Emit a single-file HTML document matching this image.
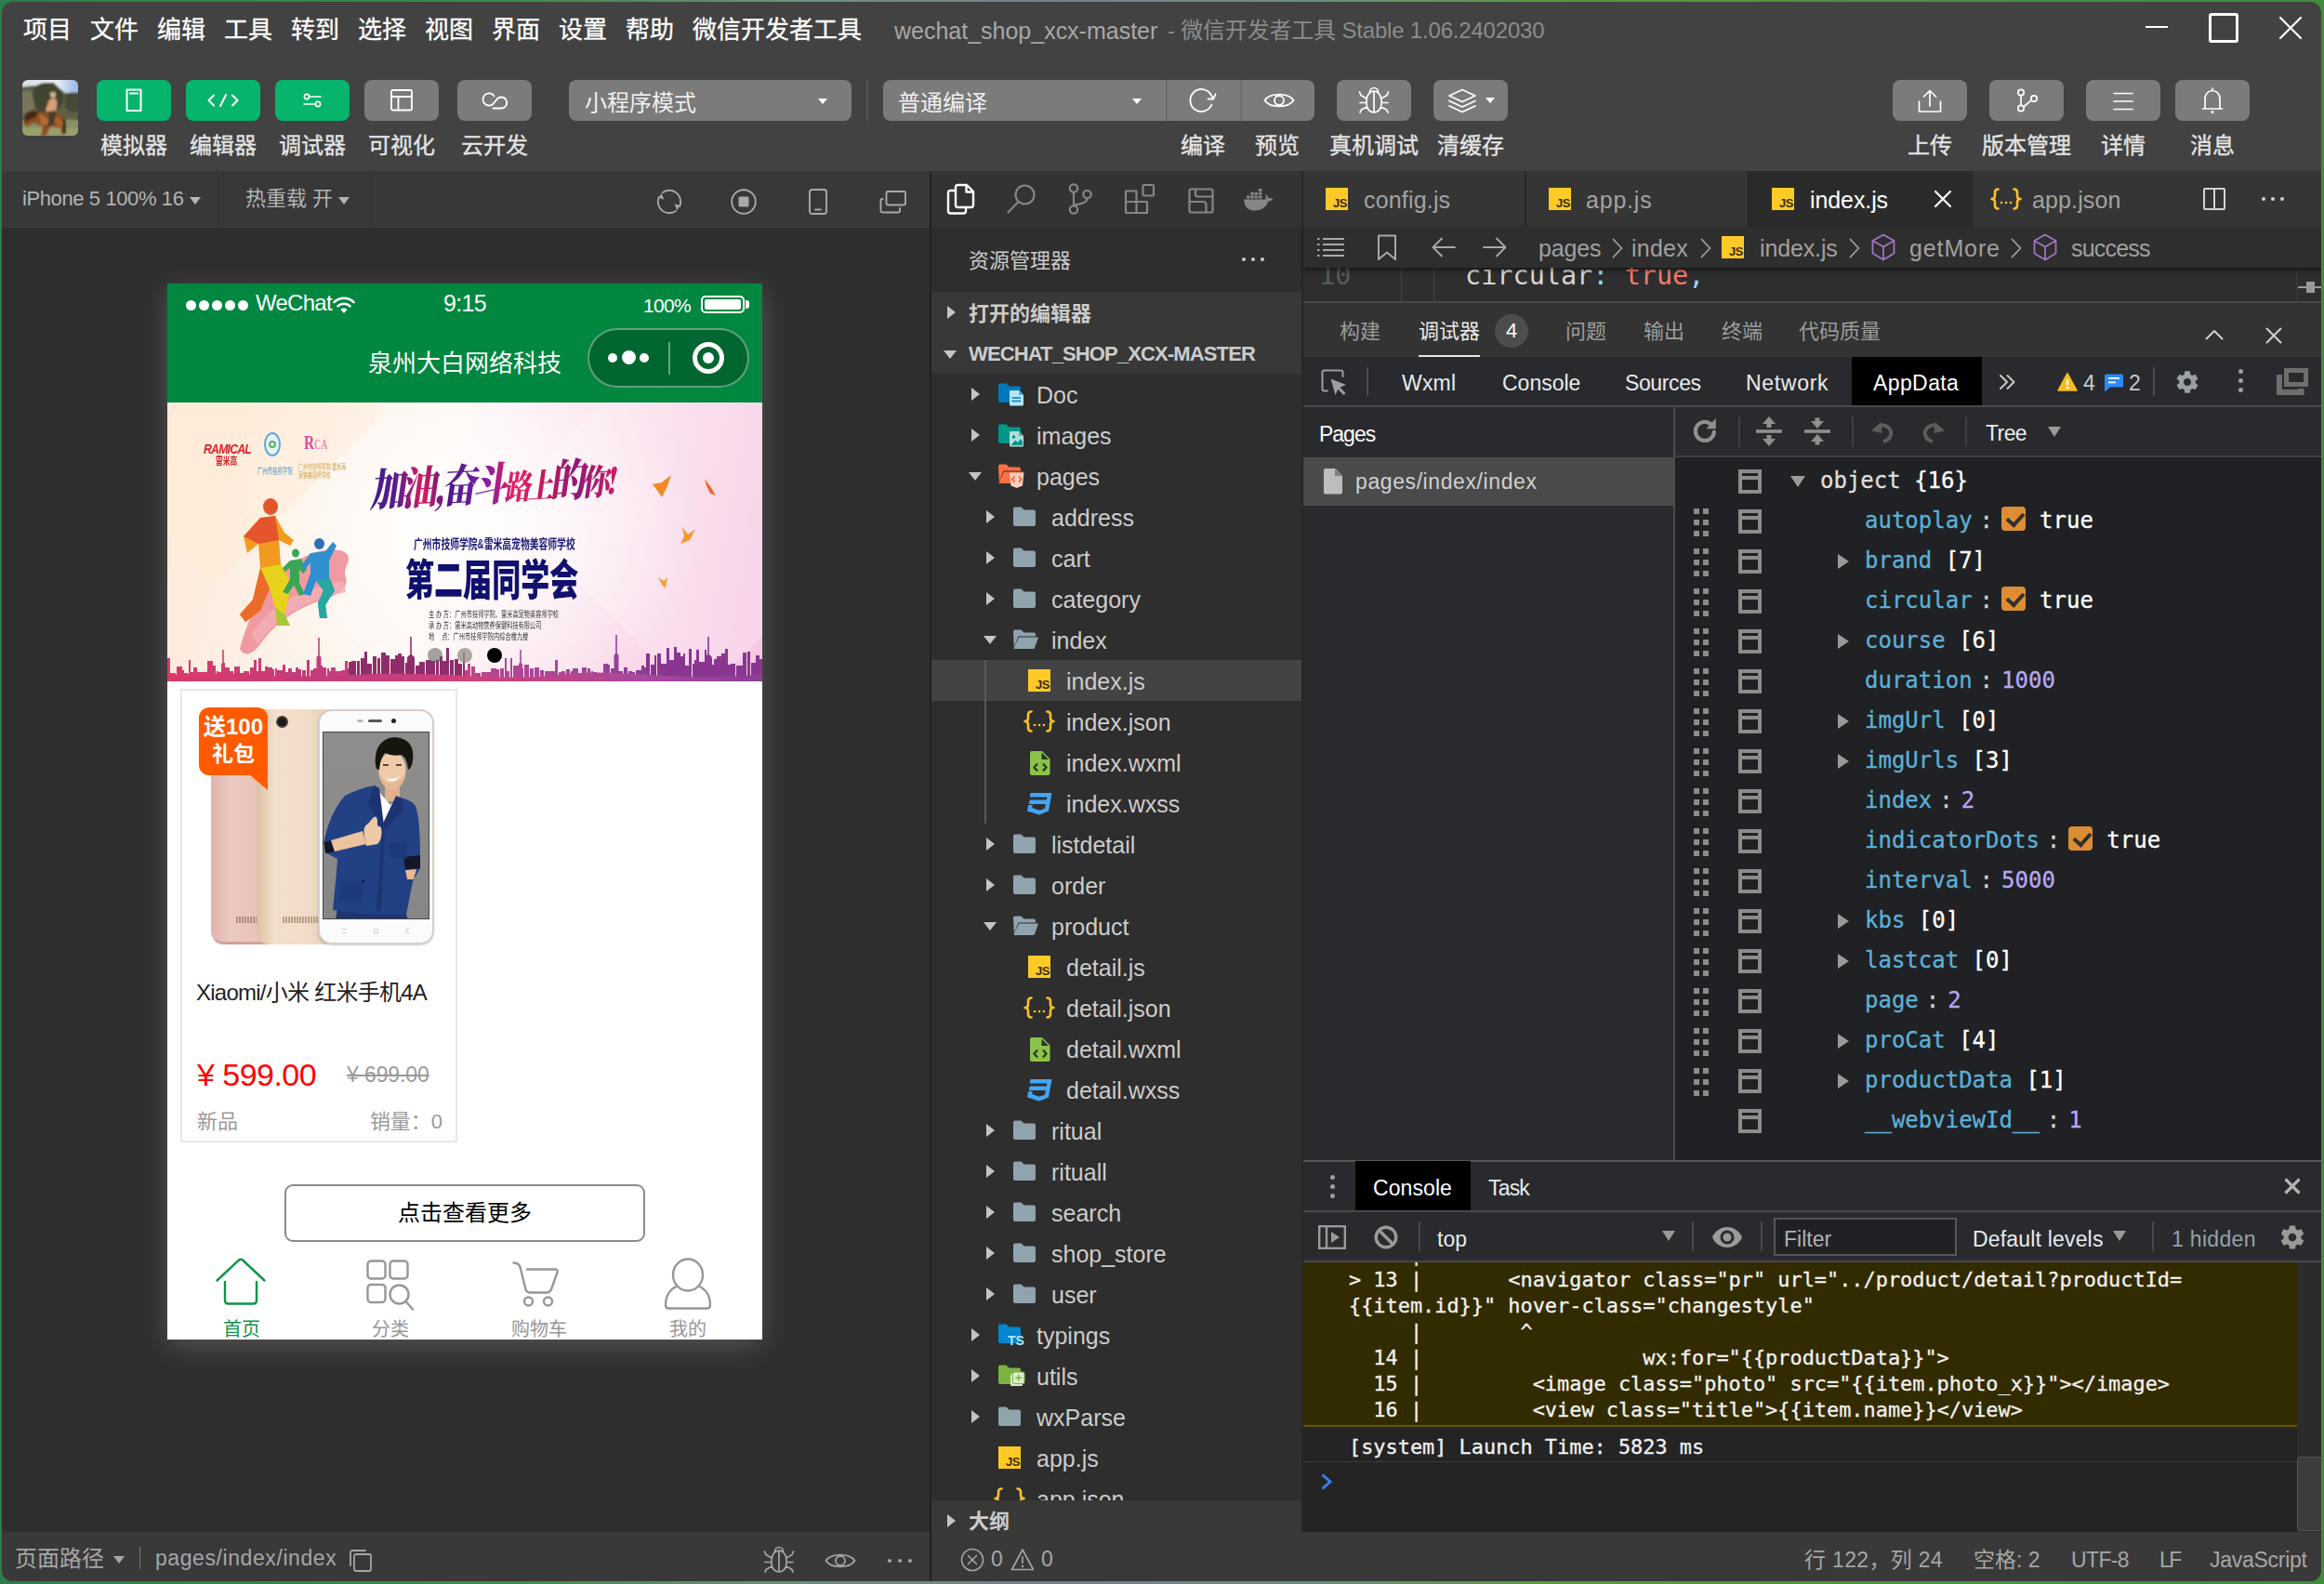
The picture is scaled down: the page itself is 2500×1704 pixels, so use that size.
<!DOCTYPE html>
<html lang="zh-CN">
<head>
<meta charset="utf-8">
<title>wechat_shop_xcx-master - 微信开发者工具 Stable 1.06.2402030</title>
<style>
html,body{margin:0;padding:0}
body{width:2500px;height:1704px;overflow:hidden;position:relative;
 background:linear-gradient(90deg,#2f7d4a 0%,#3f8a4c 22%,#6d8f7a 34%,#74808c 45%,#6f8a84 55%,#5a9a45 66%,#4c9440 80%,#3f8c3a 100%);
 font-family:"Liberation Sans","Noto Sans CJK SC",sans-serif;color:#ccc;-webkit-font-smoothing:antialiased}
*{box-sizing:border-box}
.a{position:absolute}
.win{position:absolute;left:0;top:0;width:2500px;height:1704px;clip-path:inset(2px 3px 3px 2px round 12px);background:#424242}
.t{position:absolute;white-space:nowrap;line-height:1}
.mono{font-family:"DejaVu Sans Mono","Liberation Mono",monospace}
svg{position:absolute;overflow:visible}
.st{fill:none;stroke-linecap:round;stroke-linejoin:round}
</style>
</head>
<body>
<div class="win">
<!-- ===== title bar ===== -->
<div id="menubar" style="position:absolute;left:0;top:0;width:2500px;height:62px;font-size:26px;color:#fff;-webkit-text-stroke:.3px">
<span class="t" style="left:25px;top:19px">项目</span>
<span class="t" style="left:97px;top:19px">文件</span>
<span class="t" style="left:169px;top:19px">编辑</span>
<span class="t" style="left:241px;top:19px">工具</span>
<span class="t" style="left:313px;top:19px">转到</span>
<span class="t" style="left:385px;top:19px">选择</span>
<span class="t" style="left:457px;top:19px">视图</span>
<span class="t" style="left:529px;top:19px">界面</span>
<span class="t" style="left:601px;top:19px">设置</span>
<span class="t" style="left:673px;top:19px">帮助</span>
<span class="t" style="left:745px;top:19px">微信开发者工具</span>
<span class="t" id="wt1" style="letter-spacing:-0.008px;left:962px;top:21px;color:#a8a8a8;font-size:25px;-webkit-text-stroke:0">wechat_shop_xcx-master</span>
<span class="t" id="wt2" style="letter-spacing:-0.188px;left:1256px;top:21px;color:#8c8c8c;font-size:24px;-webkit-text-stroke:0">- 微信开发者工具 Stable 1.06.2402030</span>
<!-- window controls -->
<div class="a" style="left:2308px;top:28px;width:24px;height:2px;background:#fff"></div>
<div class="a" style="left:2376px;top:14px;width:32px;height:32px;border:3px solid #fff;border-radius:3px"></div>
<svg style="left:2452px;top:18px" width="24" height="24" viewBox="0 0 24 24"><path class="st" d="M1 1 L23 23 M23 1 L1 23" stroke="#fff" stroke-width="2.2"/></svg>
</div>
<!-- ===== toolbar ===== -->
<style>
.tb{position:absolute;top:86px;height:44px;border-radius:8px;background:#7b7b7b}
.tb.g{background:#06b56b}
.tl{position:absolute;top:145px;font-size:24px;line-height:1;color:#e4e4e4;-webkit-text-stroke:.35px #e4e4e4;white-space:nowrap;transform:translateX(-50%)}
</style>
<div id="toolbar" style="position:absolute;left:0;top:62px;width:2500px;height:122px"></div>
<!-- avatar -->
<div class="a" style="left:24px;top:86px;width:60px;height:60px;border-radius:6px;overflow:hidden;background:#6b6d4a">
<svg style="left:0;top:0" width="60" height="60" viewBox="0 0 60 60">
<defs><filter id="avb" x="-20%" y="-20%" width="140%" height="140%"><feGaussianBlur stdDeviation="1.1"/></filter>
<linearGradient id="avsky" x1="0" x2="1" y1="0" y2="0"><stop offset="0" stop-color="#d9dde6"/><stop offset=".6" stop-color="#eef0f4"/><stop offset=".85" stop-color="#a9c4ea"/><stop offset="1" stop-color="#8db2e6"/></linearGradient></defs>
<g filter="url(#avb)">
<rect x="-4" y="-4" width="68" height="20" fill="url(#avsky)"/>
<path d="M-4 8 L12 6 L20 7 L24 3 L34 3 L40 9 L46 14 L64 13 V64 H-4 Z" fill="#5d6144"/>
<path d="M11 12 Q14 4 24 3 Q34 2 38 9 Q46 12 44 24 Q40 34 28 36 Q16 36 12 26 Z" fill="#3f4530"/>
<path d="M46 16 Q54 12 62 16 V34 Q52 36 46 30 Z" fill="#474a35"/>
<path d="M-4 12 L10 12 L14 30 L-4 40 Z" fill="#77745a"/>
<path d="M-4 44 Q14 40 30 46 Q46 40 64 44 V64 H-4 Z" fill="#8b9162"/>
<path d="M-4 52 H64 V64 H-4 Z" fill="#9aa06c"/>
<!-- horse -->
<path d="M3 37 Q8 32 18 34 Q28 36 36 36 Q44 36 46 42 L46 56 L43 60 L41 52 Q36 50 30 50 L26 60 L20 60 L22 50 Q16 48 12 46 L6 50 L1 48 L3 42 Z" fill="#8a4f22"/>
<path d="M18 36 Q24 38 30 44 Q26 50 20 48 Z" fill="#b06c2e"/>
<path d="M34 40 Q42 40 44 46 L42 52 Q36 48 34 44 Z" fill="#a8642a"/>
<path d="M3 37 Q8 32 18 34 L14 40 L6 44 L2 46 Z" fill="#4a2614"/>
<path d="M44 42 L47 44 L47 58 L44 58 Z" fill="#2c1a10"/>
<!-- rider -->
<path d="M28 24 Q30 19 35 20 Q38 22 37 28 L36 34 L28 35 L25 33 Z" fill="#d9a07a"/>
<circle cx="33" cy="16.500" r="2.800" fill="#d9b48e"/>
<path d="M29.500 15 H36.500 L35 13 H31 Z" fill="#cbb58c"/>
<path d="M28 34 L36 33 L35 44 L31 50 L28 50 Z" fill="#4b3a2a"/>
</g></svg>
</div>
<div class="tb g" style="left:104px;width:80px"><svg style="left:31px;top:9px" width="18" height="26" viewBox="0 0 18 26"><rect class="st" x="1.5" y="1.5" width="15" height="22.5" stroke="#fff" stroke-width="2"/><path class="st" d="M5 5.5H13" stroke="#fff" stroke-width="2" stroke-linecap="butt"/></svg></div>
<div class="tb g" style="left:200px;width:80px"><svg style="left:23px;top:15px" width="34" height="14" viewBox="0 0 34 14"><path class="st" d="M7 1.5 L1.5 7 L7 12.5 M27 1.5 L32.5 7 L27 12.5 M20 1 L14 13" stroke="#fff" stroke-width="2"/></svg></div>
<div class="tb g" style="left:296px;width:80px"><svg style="left:30px;top:14px" width="20" height="16" viewBox="0 0 20 16"><circle cx="4" cy="4" r="2.6" class="st" stroke="#fff" stroke-width="1.6"/><path class="st" d="M7 4H19 M1 12H13" stroke="#fff" stroke-width="1.6"/><circle cx="16" cy="12" r="2.6" class="st" stroke="#fff" stroke-width="1.6"/></svg></div>
<div class="tb" style="left:392px;width:80px"><svg style="left:28px;top:10px" width="24" height="24" viewBox="0 0 24 24"><rect class="st" x="1" y="1" width="22" height="21.5" rx="1.5" stroke="#fff" stroke-width="1.8"/><path class="st" d="M1 8H23 M8.5 8V22.5" stroke="#fff" stroke-width="1.8"/></svg></div>
<div class="tb" style="left:492px;width:80px"><svg style="left:25px;top:12px" width="30" height="20" viewBox="0 0 30 20"><path class="st" d="M13.5 18.5 H22.5 A6 6 0 1 0 17 9.5 L13.5 13.8 A6.6 6.6 0 1 1 14.5 5.2" stroke="#fff" stroke-width="1.8"/></svg></div>
<span class="tl" style="left:144px">模拟器</span>
<span class="tl" style="left:240px">编辑器</span>
<span class="tl" style="left:336px">调试器</span>
<span class="tl" style="left:432px">可视化</span>
<span class="tl" style="left:532px">云开发</span>
<!-- dropdowns -->
<div class="tb" style="left:612px;width:304px"><span class="t" style="left:17px;top:13px;font-size:24px;color:#f0f0f0">小程序模式</span><div class="a" style="left:268px;top:20px;border:5px solid transparent;border-top:6px solid #fff"></div></div>
<div class="a" style="left:932px;top:86px;width:2px;height:44px;background:#555"></div>
<div class="tb" style="left:950px;width:464px"><span class="t" style="left:16px;top:13px;font-size:24px;color:#f0f0f0">普通编译</span><div class="a" style="left:268px;top:20px;border:5px solid transparent;border-top:6px solid #fff"></div>
 <div class="a" style="left:304px;top:0;width:2px;height:44px;background:#6f6f6f"></div>
 <div class="a" style="left:384px;top:0;width:2px;height:44px;background:#6f6f6f"></div>
 <svg style="left:329px;top:7px" width="32" height="30" viewBox="0 0 32 30"><path class="st" d="M24.5 19.5 A12 12 0 1 1 23.5 8.5 L26 13" stroke="#fff" stroke-width="1.8"/><path class="st" d="M20.5 13.5 L26.2 13.6 L28.6 8.2" stroke="#fff" stroke-width="1.8"/></svg>
 <svg style="left:409px;top:11px" width="34" height="22" viewBox="0 0 34 22"><path class="st" d="M1.5 11 C7 2.5 27 2.5 32.5 11 C27 19.5 7 19.5 1.5 11 Z" stroke="#fff" stroke-width="1.8"/><circle cx="17" cy="11" r="5" class="st" stroke="#fff" stroke-width="1.8"/></svg>
</div>
<span class="tl" style="left:1294px">编译</span>
<span class="tl" style="left:1374px">预览</span>
<div class="tb" style="left:1438px;width:80px"><svg style="left:23px;top:7px" width="34" height="30" viewBox="0 0 34 30"><path class="st" d="M9 15 A8 10 0 0 1 25 15 V19 A8 9 0 0 1 9 19 Z M17 6 V28 M12.5 6 A4.5 4.5 0 0 1 21.500 6 M9 13 L3 9.500 L1.5 6 M25 13 L31 9.500 L32.500 6 M9 17.500 H2 M25 17.500 H32 M9.500 22 L3.500 25 L2 28 M24.500 22 L30.500 25 L32 28" stroke="#fff" stroke-width="1.7"/></svg></div>
<div class="tb" style="left:1542px;width:80px"><svg style="left:15px;top:9px" width="32" height="28" viewBox="0 0 32 28"><path class="st" d="M16 1.500 L30 8 L16 14.500 L2 8 Z M2 13.500 L16 20 L30 13.500 M2 19 L16 25.500 L30 19" stroke="#fff" stroke-width="1.7"/></svg><div class="a" style="left:56px;top:19px;border:5px solid transparent;border-top:6px solid #fff"></div></div>
<span class="tl" style="left:1478px">真机调试</span>
<span class="tl" style="left:1582px">清缓存</span>
<div class="tb" style="left:2036px;width:80px"><svg style="left:27px;top:10px" width="26" height="26" viewBox="0 0 26 26"><path class="st" d="M1.5 13 V24 H24.5 V13 M13 18 V2 M6.500 8 L13 1.500 L19.500 8" stroke="#fff" stroke-width="1.7"/></svg></div>
<div class="tb" style="left:2140px;width:80px"><svg style="left:29px;top:9px" width="24" height="26" viewBox="0 0 24 26"><circle cx="5" cy="4.500" r="3.200" class="st" stroke="#fff" stroke-width="1.7"/><circle cx="5" cy="21.500" r="3.200" class="st" stroke="#fff" stroke-width="1.7"/><circle cx="19" cy="11" r="3.200" class="st" stroke="#fff" stroke-width="1.7"/><path class="st" d="M5 8 V18 M7.800 20 L16.200 12.800" stroke="#fff" stroke-width="1.700"/></svg></div>
<div class="tb" style="left:2244px;width:80px"><svg style="left:29px;top:13px" width="22" height="20" viewBox="0 0 22 20"><path class="st" d="M1 1.500 H21 M1 10 H21 M1 18.500 H21" stroke="#fff" stroke-width="1.700" stroke-linecap="butt"/></svg></div>
<div class="tb" style="left:2340px;width:80px"><svg style="left:28px;top:7px" width="24" height="30" viewBox="0 0 24 30"><path class="st" d="M1.500 24 H22.500 M4 24 V13 A8 8.500 0 0 1 20 13 V24 M12 2 V4" stroke="#fff" stroke-width="1.700"/><circle cx="12" cy="27.500" r="1.500" fill="#fff"/></svg></div>
<span class="tl" style="left:2076px">上传</span>
<span class="tl" style="left:2180px">版本管理</span>
<span class="tl" style="left:2284px">详情</span>
<span class="tl" style="left:2380px">消息</span>
<!-- ===== simulator ===== -->
<div class="a" style="left:0;top:184px;width:1000px;height:61px;background:#383838"></div>
<div class="a" style="left:0;top:245px;width:1000px;height:1403px;background:#2e2e2e"></div>
<div class="a" style="left:0;top:1648px;width:1000px;height:56px;background:#393939"></div>
<div class="a" style="left:1000px;top:184px;width:2px;height:1520px;background:#212121"></div>
<div class="a" style="left:240px;top:184px;width:1px;height:60px;background:#333"></div>
<div class="a" style="left:398px;top:184px;width:1px;height:60px;background:#333"></div>
<span class="t" id="simdev" style="letter-spacing:-0.396px;left:24px;top:203px;font-size:22px;color:#b4b4b4">iPhone 5 100% 16</span>
<div class="a" style="left:204px;top:212px;border:6px solid transparent;border-top:8px solid #b4b4b4"></div>
<span class="t" id="simhot" style="letter-spacing:-0.025px;left:264px;top:203px;font-size:22px;color:#b4b4b4">热重载 开</span>
<div class="a" style="left:364px;top:212px;border:6px solid transparent;border-top:8px solid #b4b4b4"></div>
<!-- sim toolbar icons -->
<svg style="left:706px;top:203px" width="28" height="28" viewBox="0 0 28 28"><path class="st" d="M7 4 A12.200 12.200 0 0 1 25.060 19.160 M21 24 A12.200 12.200 0 0 1 2.940 8.840" stroke="#a8a8a8" stroke-width="1.900" stroke-linecap="butt"/><path d="M5.500 4.200 L3.200 10 L8.300 11.800 Z M22.500 23.800 L24.800 18 L19.700 16.200 Z" fill="#a8a8a8"/></svg>
<svg style="left:786px;top:203px" width="28" height="28" viewBox="0 0 28 28"><circle cx="14" cy="14" r="12.800" class="st" stroke="#a8a8a8" stroke-width="1.900"/><rect x="8.500" y="8.500" width="11" height="11" rx="1.500" fill="#a8a8a8"/></svg>
<svg style="left:870px;top:203px" width="20" height="28" viewBox="0 0 20 28"><rect x="1" y="1" width="18" height="26" rx="2.500" class="st" stroke="#a8a8a8" stroke-width="1.900"/><path class="st" d="M7 22.500 H13" stroke="#a8a8a8" stroke-width="1.900" stroke-linecap="butt"/></svg>
<svg style="left:946px;top:205px" width="30" height="26" viewBox="0 0 30 26"><rect x="7.500" y="1" width="20.500" height="14.500" rx="1.500" class="st" stroke="#a8a8a8" stroke-width="1.900"/><path class="st" d="M3.500 9 H3 A1.500 1.500 0 0 0 1.500 10.500 V22 A1.500 1.500 0 0 0 3 23.500 H20.500 A1.500 1.500 0 0 0 22 22 V19" stroke="#a8a8a8" stroke-width="1.900"/></svg>
<!-- phone -->
<div id="phone" class="a" style="left:180px;top:305px;width:640px;height:1136px;background:#fff;box-shadow:0 7px 28px rgba(255,255,255,.19);overflow:hidden">
 <div class="a" style="left:0;top:0;width:640px;height:128px;background:#028741"></div>
 <!-- status bar -->
 <div class="a" style="left:20px;top:18px;width:11px;height:11px;border-radius:50%;background:#fff;box-shadow:14px 0 0 #fff,28px 0 0 #fff,42px 0 0 #fff,56px 0 0 #fff"></div>
 <span class="t" id="wechat" style="letter-spacing:-0.728px;left:95px;top:9px;font-size:24px;color:#fff">WeChat</span>
 <svg style="left:178px;top:13px" width="24" height="20" viewBox="0 0 24 20"><path class="st" d="M1.500 7 A15 15 0 0 1 22.500 7" stroke="#fff" stroke-width="2.600"/><path class="st" d="M5.500 11.300 A9.500 9.500 0 0 1 18.500 11.300" stroke="#fff" stroke-width="2.600"/><path d="M8.500 15 A5 5 0 0 1 15.500 15 L12 19 Z" fill="#fff"/></svg>
 <span class="t" id="clock" style="letter-spacing:-0.693px;left:320px;top:9px;font-size:25px;color:#fff;transform:translateX(-50%)">9:15</span>
 <span class="t" id="batt" style="letter-spacing:-0.68px;left:512px;top:13px;font-size:21px;color:#fff">100%</span>
 <div class="a" style="left:574px;top:13px;width:47px;height:19px;border:2px solid #fff;border-radius:5px"><div class="a" style="left:2px;top:2px;width:39px;height:11px;background:#fff;border-radius:2px"></div></div>
 <div class="a" style="left:622px;top:18px;width:4px;height:9px;background:#fff;border-radius:0 3px 3px 0"></div>
 <!-- nav -->
 <span class="t" style="left:320px;top:73px;font-size:26px;color:#fff;transform:translateX(-50%)">泉州大白网络科技</span>
 <div class="a" style="left:452px;top:48px;width:174px;height:64px;border-radius:32px;background:#01662f;border:2px solid rgba(255,255,255,.38)">
  <div class="a" style="left:20px;top:25px;width:10px;height:10px;border-radius:50%;background:#fff"></div>
  <div class="a" style="left:35px;top:22px;width:15px;height:15px;border-radius:50%;background:#fff"></div>
  <div class="a" style="left:54px;top:25px;width:10px;height:10px;border-radius:50%;background:#fff"></div>
  <div class="a" style="left:85px;top:13px;width:2px;height:35px;background:rgba(255,255,255,.4)"></div>
  <div class="a" style="left:111px;top:13px;width:34px;height:34px;border-radius:50%;border:5px solid #fff"><div class="a" style="left:6px;top:6px;width:12px;height:12px;border-radius:50%;background:#fff"></div></div>
 </div>
 <!-- banner -->
 <div id="banner" class="a" style="left:0;top:128px;width:640px;height:300px;overflow:hidden;background:
   radial-gradient(ellipse 260px 200px at 50% 45%,rgba(255,255,255,.95),rgba(255,255,255,0) 100%),
   linear-gradient(100deg,#fde9d9 0%,#fdf1e6 22%,#fff7f3 45%,#fbe3ee 68%,#f6c6e3 100%)">
  <div class="a" style="left:420px;top:-40px;width:300px;height:300px;transform:rotate(45deg);background:rgba(255,255,255,.22)"></div>
  <div class="a" style="left:-80px;top:-120px;width:260px;height:260px;transform:rotate(45deg);background:rgba(255,236,214,.5)"></div>
  <!-- logos -->
  <span class="t" style="left:39px;top:42px;font-size:15px;font-weight:bold;font-style:italic;color:#d8232a;letter-spacing:-1px;transform:scaleX(.82);transform-origin:0 0">RAMICAL</span>
  <span class="t" style="left:52px;top:58px;font-size:11px;font-weight:bold;color:#d8232a;transform:scaleX(.7);transform-origin:0 0">雷米高</span>
  <div class="a" style="left:104px;top:32px;width:18px;height:26px;border-radius:50%;border:2px solid #5aa7d6;background:#e8f4fb"><div class="a" style="left:3px;top:7px;width:8px;height:8px;border-radius:50%;border:2px solid #58b25a"></div></div>
  <span class="t" style="left:97px;top:70px;font-size:9px;color:#4a90c4;transform:scaleX(.6);transform-origin:0 0">广州市技师学院</span>
  <span class="t" style="left:147px;top:32px;font-size:22px;font-weight:bold;font-family:'Liberation Serif',serif;color:#e2459a;transform:scaleX(.7);transform-origin:0 0">R<span style="font-size:14px;color:#ef86bd">CA</span></span>
  <span class="t" style="left:141px;top:66px;font-size:8px;color:#c9a04a;transform:scaleX(.62);transform-origin:0 0;line-height:1.1">广州市技师学院·雷米高<br>宠物美容师学校</span>
  <!-- runners -->
  <svg style="left:70px;top:100px" width="140" height="180" viewBox="0 0 140 180">
   <path d="M8 165 C20 120 40 90 70 70 C95 55 118 56 124 64 C128 72 118 78 122 88 C126 100 112 108 98 112 C74 120 50 132 30 160 C24 168 14 176 8 165 Z" fill="#ee8a94" opacity=".85"/>
   <path d="M20 150 C40 120 70 100 120 92 L122 104 C80 112 48 130 28 160 Z" fill="#f3b0b6" opacity=".8"/>
   <!-- main runner -->
   <path d="M33 12 a8 9 0 1 0 16 0 a8 9 0 1 0 -16 0 Z" fill="#e4552b"/>
   <path d="M30 24 L46 22 L56 40 L66 48 L62 54 L50 48 L52 74 L64 96 L56 128 L62 140 L48 140 L46 120 L40 100 L30 124 L14 136 L8 128 L22 112 L30 78 L28 52 L16 62 L12 44 Z" fill="#f29a1f"/>
   <path d="M30 24 L46 22 L50 48 L28 52 L12 44 Z" fill="#e4552b"/>
   <path d="M30 78 L52 74 L64 96 L56 128 L46 120 L40 100 Z" fill="#e8d31c"/>
   <path d="M40 100 L30 124 L14 136 L8 128 L22 112 L30 78 Z" fill="#ea6a2a"/>
   <path d="M56 128 L62 140 L48 140 L46 120 Z" fill="#a6c937"/>
   <!-- green small runner -->
   <path d="M64 62 a4 4.500 0 1 0 8 0 a4 4.500 0 1 0 -8 0 Z M62 70 L74 68 L80 80 L76 84 L72 80 L72 94 L78 106 L72 108 L66 96 L60 106 L54 104 L62 90 L62 78 L56 82 L54 78 Z" fill="#3aa655"/>
   <!-- blue runner -->
   <path d="M88 52 a5.500 6 0 1 0 11 0 a5.500 6 0 1 0 -11 0 Z" fill="#2c6fb5"/>
   <path d="M84 62 L100 60 L108 50 L112 54 L104 70 L104 88 L110 102 L100 118 L102 132 L94 132 L92 116 L98 102 L90 92 L84 108 L76 106 L84 84 L84 72 L78 80 L74 76 Z" fill="#2f8fcf"/>
   <path d="M98 102 L90 92 L104 88 L110 102 L100 118 L102 132 L94 132 L92 116 Z" fill="#27a7a0"/>
  </svg>
  <!-- headline -->
  <span class="t" id="bhead" style="left:214px;top:62px;padding:6px 14px 10px 4px;font-size:48px;font-weight:900;font-style:italic;font-family:'Noto Serif CJK SC','Noto Sans CJK SC',serif;letter-spacing:-5px;transform:rotate(-3deg) scaleX(.79);transform-origin:0 50%;background:linear-gradient(90deg,#3b1a86 0%,#5a1d8e 12%,#d81b60 22%,#4a1a8a 32%,#7b1fa2 46%,#e91e63 58%,#c2185b 70%,#8e1a7a 82%,#d81b60 100%);-webkit-background-clip:text;background-clip:text;color:transparent;-webkit-text-fill-color:transparent">加油,奋斗<span style="font-size:36px">路上</span>的<span style="font-size:38px">你!</span></span>
  <span class="t" style="left:265px;top:145px;font-size:14px;font-weight:bold;color:#1b1b7a;transform:scaleX(.7);transform-origin:0 0">广州市技师学院&amp;雷米高宠物美容师学校</span>
  <span class="t" id="bmain" style="left:256px;top:168px;font-size:46px;font-weight:900;color:#10106e;transform:scaleX(.675);transform-origin:0 0">第二届同学会</span>
  <span class="t" style="left:281px;top:222px;font-size:9px;color:#333;line-height:12px;transform:scaleX(.69);transform-origin:0 0">主 办 方：广州市技师学院、雷米高宠物美容师学校<br>承 办 方：雷米高动物营养保健科技有限公司<br>地　  点：广州市技师学院内综合楼九楼</span>
  <!-- birds -->
  <svg style="left:520px;top:76px" width="80" height="130" viewBox="0 0 80 130">
   <path d="M2 12 L12 10 L22 2 L18 14 L12 26 L8 20 Z" fill="#f08a24"/>
   <path d="M58 6 L64 14 L70 24 L64 22 L60 14 Z" fill="#ef6c2a"/>
   <path d="M34 58 L40 66 L48 60 L42 72 L32 76 L36 68 Z" fill="#f29a2e"/>
   <path d="M8 112 L14 116 L18 112 L16 124 L12 120 Z" fill="#f0a33a"/>
  </svg>
  <!-- skyline -->
  <svg style="left:0;top:236px" width="640" height="64" viewBox="0 0 640 64" preserveAspectRatio="none">
   <defs><linearGradient id="sky" x1="0" x2="1" y1="0" y2="0"><stop offset="0" stop-color="#da3a6a"/><stop offset=".3" stop-color="#c23c7c"/><stop offset=".5" stop-color="#d0407a"/><stop offset=".8" stop-color="#a8489a"/><stop offset="1" stop-color="#8a3f96"/></linearGradient></defs>
   <path fill="url(#sky)" d="M0 64 V39 H3 V64 Z M3 64 V55 H9 V64 Z M10 64 V48 H16 V64 Z M16 64 V52 H18 V64 Z M18 64 V55 H22 V64 Z M23 64 V41 H25 V64 Z M25 64 V54 H28 V64 Z M28 64 V49 H32 V64 Z M32 64 V54 H35 V64 Z M35 64 V54 H38 V64 Z M38 64 V54 H43 V64 Z M43 64 V42 H46 V64 Z M46 64 V42 H49 V64 Z M49 64 V47 H52 V64 Z M53 64 V53 H55 V64 Z M55 64 V54 H59 V64 Z M59 64 V44 H62 V64 Z M62 64 V49 H67 V64 Z M67 64 V53 H71 V64 Z M72 64 V48 H78 V64 Z M78 64 V55 H82 V64 Z M82 64 V53 H88 V64 Z M89 64 V49 H93 V64 Z M93 64 V41 H96 V64 Z M96 64 V53 H98 V64 Z M98 64 V39 H101 V64 Z M101 64 V53 H105 V64 Z M105 64 V48 H108 V64 Z M108 64 V49 H113 V64 Z M113 64 V51 H115 V64 Z M116 64 V50 H118 V64 Z M118 64 V52 H124 V64 Z M124 64 V46 H127 V64 Z M127 64 V54 H130 V64 Z M130 64 V50 H134 V64 Z M134 64 V54 H138 V64 Z M138 64 V49 H141 V64 Z M141 64 V51 H144 V64 Z M145 64 V52 H149 V64 Z M150 64 V41 H153 V64 Z M154 64 V52 H157 V64 Z M157 64 V50 H161 V64 Z M161 64 V47 H167 V64 Z M167 64 V49 H171 V64 Z M172 64 V50 H174 V64 Z M174 64 V53 H176 V64 Z M176 64 V49 H181 V64 Z M181 64 V53 H187 V64 Z M187 64 V52 H191 V64 Z M191 64 V42 H194 V64 Z M194 64 V50 H195 V64 Z M58 64 V45 L59.2 44 V30 H60.8 V44 L62 45 V64 Z M160.5 64 V38 L162.2 36 V17 H163.8 V36 L165.5 38 V64 Z M320 64 V52 H323 V64 Z M323 64 V45 H326 V64 Z M327 64 V48 H331 V64 Z M331 64 V55 H337 V64 Z M338 64 V54 H342 V64 Z M342 64 V54 H348 V64 Z M348 64 V50 H354 V64 Z M354 64 V51 H357 V64 Z M358 64 V50 H362 V64 Z M363 64 V39 H365 V64 Z M365 64 V53 H368 V64 Z M369 64 V39 H371 V64 Z M372 64 V47 H378 V64 Z M379 64 V50 H383 V64 Z M384 64 V46 H389 V64 Z M390 64 V50 H394 V64 Z M395 64 V49 H400 V64 Z M401 64 V52 H405 V64 Z M406 64 V53 H411 V64 Z M411 64 V53 H417 V64 Z M417 64 V41 H420 V64 Z M421 64 V54 H424 V64 Z M424 64 V53 H428 V64 Z M429 64 V51 H433 V64 Z M434 64 V53 H436 V64 Z M436 64 V50 H442 V64 Z M442 64 V55 H445 V64 Z M446 64 V49 H451 V64 Z M452 64 V50 H455 V64 Z M456 64 V53 H458 V64 Z M458 64 V54 H462 V64 Z M462 64 V55 H466 V64 Z M466 64 V55 H468 V64 Z M469 64 V45 H474 V64 Z M474 64 V46 H476 V64 Z M477 64 V50 H479 V64 Z M479 64 V50 H483 V64 Z M483 64 V40 H485 V64 Z M485 64 V53 H490 V64 Z M491 64 V49 H495 V64 Z M496 64 V53 H500 V64 Z M500 64 V54 H503 V64 Z M504 64 V52 H510 V64 Z M510 64 V47 H513 V64 Z M513 64 V49 H515 V64 Z M378 64 V45 L379.2 44 V30 H380.8 V44 L382 45 V64 Z M480.5 64 V36 L482.2 34 V14 H483.8 V34 L485.5 36 V64 Z"/>
   <path fill="#8f2d6c" d="M195 64 V43 H198 V64 Z M198 64 V42 H203 V64 Z M204 64 V42 H207 V64 Z M208 64 V39 H212 V64 Z M212 64 V32 H215 V64 Z M215 64 V45 H220 V64 Z M221 64 V37 H225 V64 Z M226 64 V39 H229 V64 Z M230 64 V33 H235 V64 Z M235 64 V36 H239 V64 Z M240 64 V40 H245 V64 Z M245 64 V36 H248 V64 Z M248 64 V34 H252 V64 Z M252 64 V37 H255 V64 Z M256 64 V44 H260 V64 Z M260 64 V42 H263 V64 Z M263 64 V46 H266 V64 Z M267 64 V47 H271 V64 Z M271 64 V43 H274 V64 Z M274 64 V43 H277 V64 Z M278 64 V41 H284 V64 Z M284 64 V42 H288 V64 Z M289 64 V41 H292 V64 Z M293 64 V37 H296 V64 Z M296 64 V42 H300 V64 Z M300 64 V28 H303 V64 Z M304 64 V41 H308 V64 Z M309 64 V40 H313 V64 Z M313 64 V45 H317 V64 Z M318 64 V32 H320 V64 Z M258 64 V38 L261.2 35 V16 H262.8 V35 L266 38 V64 Z"/>
   <path fill="#8a3690" d="M515 64 V34 H519 V64 Z M520 64 V46 H524 V64 Z M524 64 V36 H526 V64 Z M527 64 V34 H531 V64 Z M531 64 V45 H537 V64 Z M537 64 V28 H540 V64 Z M540 64 V41 H545 V64 Z M545 64 V27 H548 V64 Z M548 64 V33 H552 V64 Z M552 64 V37 H555 V64 Z M555 64 V34 H557 V64 Z M557 64 V47 H561 V64 Z M561 64 V29 H564 V64 Z M565 64 V45 H567 V64 Z M567 64 V41 H569 V64 Z M569 64 V30 H572 V64 Z M572 64 V43 H578 V64 Z M578 64 V30 H580 V64 Z M581 64 V47 H584 V64 Z M584 64 V46 H588 V64 Z M588 64 V40 H591 V64 Z M591 64 V37 H596 V64 Z M596 64 V34 H600 V64 Z M600 64 V29 H603 V64 Z M603 64 V46 H606 V64 Z M606 64 V45 H611 V64 Z M612 64 V47 H615 V64 Z M615 64 V47 H619 V64 Z M619 64 V33 H623 V64 Z M624 64 V32 H627 V64 Z M628 64 V44 H633 V64 Z M633 64 V36 H637 V64 Z M637 64 V40 H640 V64 Z M578 64 V38 L581.2 35 V16 H582.8 V35 L586 38 V64 Z"/>
   <path fill="url(#sky)" d="M0 64 V57 Q50 54 100 57 T200 57 T320 58 T420 57 T520 57 T640 56 V64 Z"/>
  </svg>
  <!-- indicator dots -->
  <div class="a" style="left:280px;top:264px;width:16px;height:16px;border-radius:50%;background:rgba(90,90,90,.55)"></div>
  <div class="a" style="left:312px;top:264px;width:16px;height:16px;border-radius:50%;background:rgba(150,150,140,.8)"></div>
  <div class="a" style="left:344px;top:264px;width:16px;height:16px;border-radius:50%;background:#000"></div>
 </div>
 <!-- product card (phone coords: page - (180,305)) -->
 <div id="card" class="a" style="left:14px;top:436px;width:298px;height:488px;border:2px solid #e7e7e7;background:#fff">
  <!-- product image: card-inner coords = page - (196,743) -->
  <!-- pink phone -->
  <div class="a" style="left:31px;top:20px;width:70px;height:253px;border-radius:12px 6px 6px 14px;background:linear-gradient(90deg,#e0b3ad 0%,#ecc9c2 30%,#e6beb7 100%);box-shadow:inset 0 -12px 0 -9px #d2a29c"></div>
  <div class="a" style="left:58px;top:243px;width:24px;height:7px;background:repeating-linear-gradient(90deg,#b98e88 0 2px,transparent 2px 3px)"></div>
  <!-- gold phone -->
  <div class="a" style="left:80px;top:20px;width:80px;height:253px;border-radius:12px 6px 6px 14px;background:linear-gradient(90deg,#dcc0a4 0%,#f3e0cc 25%,#f1dcc7 70%,#e5cbb2 100%)"></div>
  <div class="a" style="left:101px;top:27px;width:13px;height:13px;border-radius:50%;background:#1a1a1a;border:2px solid #4a4030"></div>
  <div class="a" style="left:90px;top:31px;width:5px;height:5px;border-radius:50%;background:#f6edd8;border:1px solid #cdb898"></div>
  <div class="a" style="left:108px;top:243px;width:40px;height:7px;background:repeating-linear-gradient(90deg,#b99f84 0 2px,transparent 2px 3px)"></div>
  <!-- white phone -->
  <div class="a" style="left:146px;top:20px;width:125px;height:253px;border-radius:15px;background:#fbfbfb;border:2px solid #d9cfc8;box-shadow:0 1px 2px rgba(0,0,0,.2)">
   <div class="a" style="left:3px;top:22px;width:115px;height:202px;background:#8b8b8b;border:1px solid #444;overflow:hidden">
    <!-- person -->
    <svg style="left:0;top:0" width="115" height="202" viewBox="0 0 115 202">
     <defs><linearGradient id="pbg" x1="0" x2="0" y1="0" y2="1"><stop offset="0" stop-color="#8f8e8d"/><stop offset="1" stop-color="#868686"/></linearGradient>
     <filter id="pblur" x="-5%" y="-5%" width="110%" height="110%"><feGaussianBlur stdDeviation=".5"/></filter></defs>
     <rect width="115" height="202" fill="url(#pbg)"/>
     <g filter="url(#pblur)">
     <path d="M13 202 L15 188 L50 192 L88 192 L91 202 Z" fill="#1b3470"/>
     <path d="M66 58 H82 V74 H66 Z" fill="#e2b08c"/>
     <path d="M23 68 Q38 60 55 57 L63 99 L83 70 Q95 73 99 79 Q104 92 104 136 L104 146 L96 160 L89 196 Q50 198 10 191 L14 150 L15 136 L2 129 L0.500 118 Q6 88 23 68 Z" fill="#213f84"/>
     <path d="M58 62 L72 78 L82 70 L63.500 98 Z" fill="#ffffff"/>
     <path d="M55 57 L60 60 L65 100 L62 104 L48 76 Z" fill="#1a3572"/>
     <path d="M83 70 L78 68 L63 100 L66 104 L86 84 Z" fill="#1a3572"/>
     <path d="M63 100 L60 150 L56 192 L62 192 L66 104 Z" fill="#1a3572"/>
     <path d="M0.500 118 L8 116 L12 128 L2 130 Z" fill="#17162c"/>
     <path d="M8 116 L42 106 L46 120 L12 128 Z" fill="#ecc29f"/>
     <path d="M44 112 Q42 100 48 98 L53 92 Q57 88 58 94 L58 100 L62 102 Q64 114 58 120 L46 122 Z" fill="#efc8a6"/>
     <path d="M86 134 L104 132 L104 146 L88 148 Z" fill="#17162c"/>
     <path d="M88 148 L100 147 L97 158 L90 158 Z" fill="#e6ba96"/>
     <path d="M70 118 L90 118 L89 136 L71 134 Z" fill="#1d3a7a"/>
     <path d="M18 160 L42 162 L40 184 L17 180 Z" fill="#1d3a7a"/>
     <ellipse cx="74" cy="41" rx="14.500" ry="20" fill="#f0caa9"/>
     <path d="M61 44 Q60 56 70 60 Q76 62 82 58 Q88 52 88 44 Q80 56 70 54 Q64 52 61 44 Z" fill="#e6b893"/>
     <path d="M56 34 Q54 16 66 8 Q76 2 88 8 Q98 14 96 30 Q95 38 91 40 Q90 28 84 24 Q74 26 66 22 Q61 28 60 40 Q56 40 56 34 Z" fill="#191411"/>
     <path d="M66 48 Q74 53 82 47 Q75 57 66 48 Z" fill="#fff"/>
     <path d="M64 35 h6 M78 35 h6" stroke="#2a1c14" stroke-width="1.400"/>
     <circle cx="42.500" cy="160" r="1.300" fill="#0f1838"/>
     </g>
    </svg>
   </div>
   <div class="a" style="left:52px;top:9px;width:15px;height:3px;border-radius:2px;background:#555"></div>
   <div class="a" style="left:40px;top:9px;width:7px;height:3px;border-radius:2px;background:#bbb"></div>
   <div class="a" style="left:77px;top:8px;width:5px;height:5px;border-radius:50%;background:#222"></div>
   <div class="a" style="left:24px;top:234px;width:5px;height:5px;border-top:1px solid #d0d0d0;border-bottom:1px solid #d0d0d0"></div>
   <div class="a" style="left:58px;top:234px;width:5px;height:5px;border:1px solid #d0d0d0"></div>
   <div class="a" style="left:93px;top:234px;width:5px;height:5px;border-left:1px solid #d0d0d0;border-bottom:1px solid #d0d0d0;transform:rotate(45deg)"></div>
  </div>
  <!-- badge -->
  <div class="a" style="left:18px;top:18px;width:74px;height:73px;border-radius:11px 11px 0 11px;background:#ff5a00"></div>
  <div class="a" style="left:72px;top:90px;width:20px;height:17px;background:#ff5a00;clip-path:polygon(0 0,100% 0,100% 100%)"></div>
  <span class="t" style="left:55px;top:27px;font-size:24px;font-weight:bold;color:#fff;transform:translateX(-50%)">送100</span>
  <span class="t" style="left:55px;top:57px;font-size:23px;font-weight:bold;color:#fff;transform:translateX(-50%)">礼包</span>
  <!-- texts -->
  <span class="t" id="ptitle" style="letter-spacing:-0.748px;left:15px;top:313px;font-size:24px;color:#222">Xiaomi/小米 红米手机4A</span>
  <span class="t" id="pprice" style="letter-spacing:-0.532px;left:16px;top:396px;font-size:34px;color:#ff0000">¥ 599.00</span>
  <span class="t" id="pold" style="letter-spacing:-0.104px;left:177px;top:402px;font-size:23px;color:#9a9a9a;text-decoration:line-through">¥ 699.00</span>
  <span class="t" style="left:16px;top:453px;font-size:22px;color:#9a9a9a">新品</span>
  <span class="t" id="psale" style="letter-spacing:-0.037px;right:14px;top:453px;font-size:22px;color:#9a9a9a">销量：0</span>
 </div>
 <!-- more button -->
 <div class="a" style="left:126px;top:969px;width:388px;height:62px;border:2px solid #8a8a8a;border-radius:9px;background:#fff"><span class="t" style="left:50%;top:17px;font-size:24px;color:#000;transform:translateX(-50%)">点击查看更多</span></div>
 <!-- tabbar -->
 <svg style="left:52px;top:1048px" width="54" height="52" viewBox="0 0 54 52"><path class="st" d="M1.500 24.500 L25 2.500 Q27 1 29 2.500 L52.500 24.500" stroke="#0f9448" stroke-width="2.400"/><path class="st" d="M10 26 V46 Q10 49.500 13.500 49.500 H40.500 Q44 49.500 44 46 V26" stroke="#0f9448" stroke-width="2.400"/></svg>
 <span class="t" style="left:80px;top:1115px;font-size:20px;color:#0f9448;transform:translateX(-50%)">首页</span>
 <svg style="left:214px;top:1050px" width="52" height="56" viewBox="0 0 52 56"><rect x="1.500" y="1.500" width="19" height="19" rx="3.500" class="st" stroke="#979797" stroke-width="2.400"/><rect x="25.500" y="1.500" width="19" height="19" rx="3.500" class="st" stroke="#979797" stroke-width="2.400"/><rect x="1.500" y="27" width="19" height="19" rx="3.500" class="st" stroke="#979797" stroke-width="2.400"/><circle cx="35.500" cy="37.500" r="10" class="st" stroke="#979797" stroke-width="2.400"/><path class="st" d="M43 45.500 L50 53.500" stroke="#979797" stroke-width="2.400"/></svg>
 <span class="t" style="left:240px;top:1115px;font-size:20px;color:#979797;transform:translateX(-50%)">分类</span>
 <svg style="left:371px;top:1052px" width="52" height="50" viewBox="0 0 52 50"><path class="st" d="M1.500 1.500 Q7 1.500 8.500 6 L14.500 30 Q15.500 33.500 19 33.500 H37 Q40.500 33.500 42 30 L48.500 12 Q49.500 8.500 46 8.500 H16" stroke="#979797" stroke-width="2.400"/><circle cx="17.500" cy="43" r="4.500" class="st" stroke="#979797" stroke-width="2.400"/><circle cx="38.500" cy="43" r="4.500" class="st" stroke="#979797" stroke-width="2.400"/></svg>
 <span class="t" style="left:400px;top:1115px;font-size:20px;color:#979797;transform:translateX(-50%)">购物车</span>
 <svg style="left:534px;top:1048px" width="52" height="56" viewBox="0 0 52 56"><ellipse cx="26" cy="18.500" rx="16" ry="17" class="st" stroke="#979797" stroke-width="2.400"/><path class="st" d="M14.500 30.500 Q2 36 2 51 Q2 54.500 5.500 54.500 H46.500 Q50 54.500 50 51 Q50 36 37.500 30.500" stroke="#979797" stroke-width="2.400"/></svg>
 <span class="t" style="left:560px;top:1115px;font-size:20px;color:#979797;transform:translateX(-50%)">我的</span>
</div>
<!-- sim status bar -->
<span class="t" style="left:16px;top:1665px;font-size:24px;color:#a6a6a6">页面路径</span>
<div class="a" style="left:122px;top:1674px;border:6px solid transparent;border-top:8px solid #a6a6a6"></div>
<div class="a" style="left:150px;top:1664px;width:1px;height:24px;background:#777"></div>
<span class="t" id="simpath" style="letter-spacing:0.581px;left:167px;top:1665px;font-size:23px;color:#a6a6a6">pages/index/index</span>
<svg style="left:376px;top:1667px" width="24" height="24" viewBox="0 0 24 24"><rect x="5" y="5" width="18" height="18" rx="2" class="st" stroke="#a6a6a6" stroke-width="1.800"/><path class="st" d="M1 17 V3 A2 2 0 0 1 3 1 H17" stroke="#a6a6a6" stroke-width="1.800"/></svg>
<svg style="left:821px;top:1663px" width="34" height="30" viewBox="0 0 34 30"><path class="st" d="M9 15 A8 10 0 0 1 25 15 V19 A8 9 0 0 1 9 19 Z M17 6 V28 M12.500 6 A4.500 4.500 0 0 1 21.500 6 M9 13 L3 9.500 L1.500 6 M25 13 L31 9.500 L32.500 6 M9 17.500 H2 M25 17.500 H32 M9.500 22 L3.500 25 L2 28 M24.500 22 L30.500 25 L32 28" stroke="#a6a6a6" stroke-width="1.700"/></svg>
<svg style="left:887px;top:1668px" width="34" height="22" viewBox="0 0 34 22"><path class="st" d="M1.500 11 C7 2.500 27 2.500 32.500 11 C27 19.500 7 19.500 1.500 11 Z" stroke="#a6a6a6" stroke-width="1.800"/><circle cx="17" cy="11" r="5" class="st" stroke="#a6a6a6" stroke-width="1.800"/></svg>
<div class="a" style="left:955px;top:1677px;width:4px;height:4px;border-radius:50%;background:#a6a6a6;box-shadow:11px 0 0 #a6a6a6,22px 0 0 #a6a6a6"></div>
<!-- ===== explorer ===== -->
<style>
.ex{position:absolute;left:1002px;width:398px}
.row{position:absolute;left:0;width:398px;height:44px}
.row .lb{position:absolute;top:11px;font-size:25px;line-height:1;color:#cccccc;white-space:nowrap}
.ar{position:absolute;width:0;height:0}
.ar.r{border:7px solid transparent;border-left:9px solid #c4c4c4;border-right:0}
.ar.d{border:7px solid transparent;border-top:9px solid #c4c4c4;border-bottom:0}
.ic{position:absolute}
</style>
<div class="ex" style="top:184px;height:60px;background:#333333"></div>
<div class="ex" style="top:244px;height:1404px;background:#2e2e2e"></div>

<svg style="left:1018px;top:197px" width="32" height="34" viewBox="0 0 32 34"><path class="st" d="M10 8 H4.500 Q2 8 2 10.500 V30 Q2 32.500 4.500 32.500 H18.500 Q21 32.500 21 30 V26" stroke="#fff" stroke-width="2.400"/><path class="st" d="M12.500 2 H22 L29 9 V23.500 Q29 26 26.500 26 H12.500 Q10 26 10 23.500 V4.500 Q10 2 12.500 2 Z M21.500 2.500 V9.500 H28.500" stroke="#fff" stroke-width="2.400"/></svg>
<svg style="left:1083px;top:198px" width="32" height="32" viewBox="0 0 32 32"><circle cx="19.500" cy="11.500" r="10" class="st" stroke="#868686" stroke-width="2.200"/><path class="st" d="M12.500 19 L1.500 30.500" stroke="#868686" stroke-width="2.200"/></svg>
<svg style="left:1148px;top:197px" width="28" height="34" viewBox="0 0 28 34"><circle cx="7" cy="5.500" r="4.200" class="st" stroke="#868686" stroke-width="2.200"/><circle cx="7" cy="28.500" r="4.200" class="st" stroke="#868686" stroke-width="2.200"/><circle cx="21.500" cy="12" r="4.200" class="st" stroke="#868686" stroke-width="2.200"/><path class="st" d="M7 10 V24 M21.500 16.500 Q21.500 22 7 23.500" stroke="#868686" stroke-width="2.200"/></svg>
<svg style="left:1209px;top:197px" width="34" height="34" viewBox="0 0 34 34"><path class="st" d="M2 8.500 H13.500 V20 H25 V32 H3.500 Q2 32 2 30.500 Z M2 20 H13.500 V32" stroke="#868686" stroke-width="2.200"/><rect x="20.500" y="2" width="11.500" height="11.500" rx="1" class="st" stroke="#868686" stroke-width="2.200"/></svg>
<svg style="left:1278px;top:202px" width="28" height="28" viewBox="0 0 28 28"><rect x="1.500" y="1.500" width="25" height="25" rx="2" class="st" stroke="#868686" stroke-width="2.200"/><path class="st" d="M8 1.500 V7 Q8 9.500 10.500 9.500 H26.500 M1.500 15 H16 Q19.500 15 19.500 18.500 V26.500" stroke="#868686" stroke-width="2.200"/></svg>
<svg style="left:1337px;top:202px" width="34" height="26" viewBox="0 0 34 26"><path d="M1 12.500 H24.500 Q25.500 9 24 6.500 Q26.500 7.500 27.500 11 Q30.500 10.500 32.500 12 Q31 14.500 27.500 14.500 Q24 24.500 12.500 24.500 Q2 24.500 1 12.500 Z" fill="#868686"/><path d="M4 8.500 h3.500 v3 h-3.500z M8.300 8.500 h3.500 v3 h-3.500z M12.600 8.500 h3.500 v3 h-3.500z M16.900 8.500 h3.500 v3 h-3.500z M8.300 4.700 h3.500 v3 h-3.500z M12.600 4.700 h3.500 v3 h-3.500z M16.900 4.700 h3.500 v3 h-3.500z M16.900 .9 h3.500 v3 h-3.500z" fill="#868686"/></svg>

<span class="t" style="left:1042px;top:270px;font-size:22px;color:#cccccc">资源管理器</span>
<div class="a" style="left:1336px;top:277px;width:4px;height:4px;border-radius:50%;background:#ccc;box-shadow:10px 0 0 #ccc,20px 0 0 #ccc"></div>
<div class="ex" style="top:314px;height:88px;background:#383838"></div>
<div class="ar r" style="left:1019px;top:329px"></div>
<span class="t" style="left:1042px;top:327px;font-size:22px;font-weight:bold;color:#cccccc">打开的编辑器</span>
<div class="ar d" style="left:1015px;top:377px"></div>
<span class="t" id="projname" style="letter-spacing:-0.872px;left:1042px;top:370px;font-size:22px;font-weight:bold;color:#cccccc">WECHAT_SHOP_XCX-MASTER</span>
<div class="ex" id="tree" style="top:402px;height:1212px;overflow:hidden">

<div class="row" style="top:0px"><div class="ar r" style="left:43px;top:15px"></div><svg class="ic" style="left:70px;top:9px" width="30" height="26" viewBox="0 0 30 26"><path d="M2 3.500 Q2 1.500 4 1.500 H10.500 L13.500 4.500 H24 Q26 4.500 26 6.500 V20 Q26 22 24 22 H4 Q2 22 2 20 Z" fill="#0277bd"/><path d="M15 9 H24 L29 14 V24 Q29 25.500 27.500 25.500 H15 Q14 25.500 14 24 V10 Q14 9 15 9 Z" fill="#b3e5fc"/><path d="M16.500 17 H26 M16.500 20.500 H26" stroke="#0277bd" stroke-width="1.600"/><path d="M24 9 V14 H29 Z" fill="#4fb3e8"/></svg><span class="lb" style="left:113px">Doc</span></div>
<div class="row" style="top:44px"><div class="ar r" style="left:43px;top:15px"></div><svg class="ic" style="left:70px;top:9px" width="30" height="26" viewBox="0 0 30 26"><path d="M2 3.500 Q2 1.500 4 1.500 H10.500 L13.500 4.500 H24 Q26 4.500 26 6.500 V20 Q26 22 24 22 H4 Q2 22 2 20 Z" fill="#009688"/><path d="M15 9 H24 L29 14 V24 Q29 25.500 27.500 25.500 H15 Q14 25.500 14 24 V10 Q14 9 15 9 Z" fill="#b2dfdb"/><path d="M15.500 24 L20.500 18.500 L23 21 L26 17 L28 20 V24 Z" fill="#009688"/><circle cx="18.500" cy="15" r="1.800" fill="#009688"/><path d="M24 9 V14 H29 Z" fill="#4db6ac"/></svg><span class="lb" style="left:113px">images</span></div>
<div class="row" style="top:88px"><div class="ar d" style="left:40px;top:18px"></div><svg class="ic" style="left:70px;top:8px" width="32" height="28" viewBox="0 0 32 28"><path d="M2 3.500 Q2 1.500 4 1.500 H10.500 L13.500 4.500 H24 Q26 4.500 26 6.500 V8.500 H7.500 L2.800 20 Z" fill="#ff7043"/><path d="M8 9.500 H29 L25.200 20.500 Q24.700 22 23 22 H3.500 Q2.300 22 2.800 20.500 Z" fill="#ff7043"/><path d="M14 10.500 H29.500 L28 24.500 L21.700 27 L15.500 24.500 Z" fill="#ffccbc"/><path d="M19.500 14.500 L16.800 17.500 L19.500 20.500 M24 14.500 L26.700 17.500 L24 20.500" stroke="#ff5722" stroke-width="1.600" fill="none"/></svg><span class="lb" style="left:113px">pages</span></div>
<div class="row" style="top:132px"><div class="ar r" style="left:59px;top:15px"></div><svg class="ic" style="left:86px;top:10px" width="28" height="24" viewBox="0 0 28 24"><path d="M2 3.500 Q2 1.500 4 1.500 H10.500 L13.500 4.500 H24 Q26 4.500 26 6.500 V20 Q26 22 24 22 H4 Q2 22 2 20 Z" fill="#90a4ae"/></svg><span class="lb" style="left:129px">address</span></div>
<div class="row" style="top:176px"><div class="ar r" style="left:59px;top:15px"></div><svg class="ic" style="left:86px;top:10px" width="28" height="24" viewBox="0 0 28 24"><path d="M2 3.500 Q2 1.500 4 1.500 H10.500 L13.500 4.500 H24 Q26 4.500 26 6.500 V20 Q26 22 24 22 H4 Q2 22 2 20 Z" fill="#90a4ae"/></svg><span class="lb" style="left:129px">cart</span></div>
<div class="row" style="top:220px"><div class="ar r" style="left:59px;top:15px"></div><svg class="ic" style="left:86px;top:10px" width="28" height="24" viewBox="0 0 28 24"><path d="M2 3.500 Q2 1.500 4 1.500 H10.500 L13.500 4.500 H24 Q26 4.500 26 6.500 V20 Q26 22 24 22 H4 Q2 22 2 20 Z" fill="#90a4ae"/></svg><span class="lb" style="left:129px">category</span></div>
<div class="row" style="top:264px"><div class="ar d" style="left:56px;top:18px"></div><svg class="ic" style="left:86px;top:10px" width="30" height="24" viewBox="0 0 30 24"><path d="M2 3.500 Q2 1.500 4 1.500 H10.500 L13.500 4.500 H24 Q26 4.500 26 6.500 V8.500 H7.500 L2.800 20 Z" fill="#90a4ae"/><path d="M8 9.500 H29 L25.200 20.500 Q24.700 22 23 22 H3.500 Q2.300 22 2.800 20.500 Z" fill="#90a4ae"/></svg><span class="lb" style="left:129px">index</span></div>
<div class="row" style="top:308px;background:#434343"><div class="ic" style="left:104px;top:10px;width:24px;height:24px;background:#ffca28"><span style="position:absolute;right:1px;bottom:1px;font-size:13px;line-height:1;font-weight:bold;color:#3a2c00;letter-spacing:-.5px">JS</span></div><span class="lb" style="left:145px">index.js</span></div>
<div class="row" style="top:352px"><svg class="ic" style="left:99px;top:10px" width="34" height="24" viewBox="0 0 34 24"><path class="st" d="M8.500 1.500 Q5 1.500 5 5 V8.500 Q5 12 1.500 12 Q5 12 5 15.500 V19 Q5 22.500 8.500 22.500 M25.500 1.500 Q29 1.500 29 5 V8.500 Q29 12 32.500 12 Q29 12 29 15.500 V19 Q29 22.500 25.500 22.500" stroke="#fbc02d" stroke-width="2.600"/><circle cx="12" cy="16" r="1.300" fill="#fbc02d"/><circle cx="17" cy="16" r="1.300" fill="#fbc02d"/><circle cx="22" cy="16" r="1.300" fill="#fbc02d"/></svg><span class="lb" style="left:145px">index.json</span></div>
<div class="row" style="top:396px"><svg class="ic" style="left:105px;top:9px" width="24" height="28" viewBox="0 0 24 28"><path d="M3 1 H14 L22.500 9.500 V24.500 Q22.500 27 20 27 H3.500 Q1 27 1 24.500 V3 Q1 1 3 1 Z" fill="#8bc34a"/><path d="M13.500 2.500 V10 H21 Z" fill="#2e2e2e"/><path d="M9 14.500 L5.500 18.500 L9 22.500 M15 14.500 L18.500 18.500 L15 22.500" stroke="#2a3a12" stroke-width="2.200" fill="none"/></svg><span class="lb" style="left:145px">index.wxml</span></div>
<div class="row" style="top:440px"><svg class="ic" style="left:102px;top:10px" width="30" height="26" viewBox="0 0 30 26"><path d="M4.500 1 H27.500 L24 20.500 L14 24.500 L1 20.500 L2.200 14 H6.700 L6.200 17 L14 19.800 L20 17.700 L20.800 13 H2.800 L3.700 8.500 H21.800 L22.300 5.500 H3.700 Z" fill="#42a5f5"/></svg><span class="lb" style="left:145px">index.wxss</span></div>
<div class="row" style="top:484px"><div class="ar r" style="left:59px;top:15px"></div><svg class="ic" style="left:86px;top:10px" width="28" height="24" viewBox="0 0 28 24"><path d="M2 3.500 Q2 1.500 4 1.500 H10.500 L13.500 4.500 H24 Q26 4.500 26 6.500 V20 Q26 22 24 22 H4 Q2 22 2 20 Z" fill="#90a4ae"/></svg><span class="lb" style="left:129px">listdetail</span></div>
<div class="row" style="top:528px"><div class="ar r" style="left:59px;top:15px"></div><svg class="ic" style="left:86px;top:10px" width="28" height="24" viewBox="0 0 28 24"><path d="M2 3.500 Q2 1.500 4 1.500 H10.500 L13.500 4.500 H24 Q26 4.500 26 6.500 V20 Q26 22 24 22 H4 Q2 22 2 20 Z" fill="#90a4ae"/></svg><span class="lb" style="left:129px">order</span></div>
<div class="row" style="top:572px"><div class="ar d" style="left:56px;top:18px"></div><svg class="ic" style="left:86px;top:10px" width="30" height="24" viewBox="0 0 30 24"><path d="M2 3.500 Q2 1.500 4 1.500 H10.500 L13.500 4.500 H24 Q26 4.500 26 6.500 V8.500 H7.500 L2.800 20 Z" fill="#90a4ae"/><path d="M8 9.500 H29 L25.200 20.500 Q24.700 22 23 22 H3.500 Q2.300 22 2.800 20.500 Z" fill="#90a4ae"/></svg><span class="lb" style="left:129px">product</span></div>
<div class="row" style="top:616px"><div class="ic" style="left:104px;top:10px;width:24px;height:24px;background:#ffca28"><span style="position:absolute;right:1px;bottom:1px;font-size:13px;line-height:1;font-weight:bold;color:#3a2c00;letter-spacing:-.5px">JS</span></div><span class="lb" style="left:145px">detail.js</span></div>
<div class="row" style="top:660px"><svg class="ic" style="left:99px;top:10px" width="34" height="24" viewBox="0 0 34 24"><path class="st" d="M8.500 1.500 Q5 1.500 5 5 V8.500 Q5 12 1.500 12 Q5 12 5 15.500 V19 Q5 22.500 8.500 22.500 M25.500 1.500 Q29 1.500 29 5 V8.500 Q29 12 32.500 12 Q29 12 29 15.500 V19 Q29 22.500 25.500 22.500" stroke="#fbc02d" stroke-width="2.600"/><circle cx="12" cy="16" r="1.300" fill="#fbc02d"/><circle cx="17" cy="16" r="1.300" fill="#fbc02d"/><circle cx="22" cy="16" r="1.300" fill="#fbc02d"/></svg><span class="lb" style="left:145px">detail.json</span></div>
<div class="row" style="top:704px"><svg class="ic" style="left:105px;top:9px" width="24" height="28" viewBox="0 0 24 28"><path d="M3 1 H14 L22.500 9.500 V24.500 Q22.500 27 20 27 H3.500 Q1 27 1 24.500 V3 Q1 1 3 1 Z" fill="#8bc34a"/><path d="M13.500 2.500 V10 H21 Z" fill="#2e2e2e"/><path d="M9 14.500 L5.500 18.500 L9 22.500 M15 14.500 L18.500 18.500 L15 22.500" stroke="#2a3a12" stroke-width="2.200" fill="none"/></svg><span class="lb" style="left:145px">detail.wxml</span></div>
<div class="row" style="top:748px"><svg class="ic" style="left:102px;top:10px" width="30" height="26" viewBox="0 0 30 26"><path d="M4.500 1 H27.500 L24 20.500 L14 24.500 L1 20.500 L2.200 14 H6.700 L6.200 17 L14 19.800 L20 17.700 L20.800 13 H2.800 L3.700 8.500 H21.800 L22.300 5.500 H3.700 Z" fill="#42a5f5"/></svg><span class="lb" style="left:145px">detail.wxss</span></div>
<div class="row" style="top:792px"><div class="ar r" style="left:59px;top:15px"></div><svg class="ic" style="left:86px;top:10px" width="28" height="24" viewBox="0 0 28 24"><path d="M2 3.500 Q2 1.500 4 1.500 H10.500 L13.500 4.500 H24 Q26 4.500 26 6.500 V20 Q26 22 24 22 H4 Q2 22 2 20 Z" fill="#90a4ae"/></svg><span class="lb" style="left:129px">ritual</span></div>
<div class="row" style="top:836px"><div class="ar r" style="left:59px;top:15px"></div><svg class="ic" style="left:86px;top:10px" width="28" height="24" viewBox="0 0 28 24"><path d="M2 3.500 Q2 1.500 4 1.500 H10.500 L13.500 4.500 H24 Q26 4.500 26 6.500 V20 Q26 22 24 22 H4 Q2 22 2 20 Z" fill="#90a4ae"/></svg><span class="lb" style="left:129px">rituall</span></div>
<div class="row" style="top:880px"><div class="ar r" style="left:59px;top:15px"></div><svg class="ic" style="left:86px;top:10px" width="28" height="24" viewBox="0 0 28 24"><path d="M2 3.500 Q2 1.500 4 1.500 H10.500 L13.500 4.500 H24 Q26 4.500 26 6.500 V20 Q26 22 24 22 H4 Q2 22 2 20 Z" fill="#90a4ae"/></svg><span class="lb" style="left:129px">search</span></div>
<div class="row" style="top:924px"><div class="ar r" style="left:59px;top:15px"></div><svg class="ic" style="left:86px;top:10px" width="28" height="24" viewBox="0 0 28 24"><path d="M2 3.500 Q2 1.500 4 1.500 H10.500 L13.500 4.500 H24 Q26 4.500 26 6.500 V20 Q26 22 24 22 H4 Q2 22 2 20 Z" fill="#90a4ae"/></svg><span class="lb" style="left:129px">shop_store</span></div>
<div class="row" style="top:968px"><div class="ar r" style="left:59px;top:15px"></div><svg class="ic" style="left:86px;top:10px" width="28" height="24" viewBox="0 0 28 24"><path d="M2 3.500 Q2 1.500 4 1.500 H10.500 L13.500 4.500 H24 Q26 4.500 26 6.500 V20 Q26 22 24 22 H4 Q2 22 2 20 Z" fill="#90a4ae"/></svg><span class="lb" style="left:129px">user</span></div>
<div class="row" style="top:1012px"><div class="ar r" style="left:43px;top:15px"></div><svg class="ic" style="left:70px;top:9px" width="32" height="26" viewBox="0 0 32 26"><path d="M2 3.500 Q2 1.500 4 1.500 H10.500 L13.500 4.500 H24 Q26 4.500 26 6.500 V20 Q26 22 24 22 H4 Q2 22 2 20 Z" fill="#0288d1"/><text x="12" y="24" font-family="Liberation Sans,sans-serif" font-weight="bold" font-size="14" fill="#b3e5fc">TS</text></svg><span class="lb" style="left:113px">typings</span></div>
<div class="row" style="top:1056px"><div class="ar r" style="left:43px;top:15px"></div><svg class="ic" style="left:70px;top:9px" width="32" height="26" viewBox="0 0 32 26"><path d="M2 3.500 Q2 1.500 4 1.500 H10.500 L13.500 4.500 H24 Q26 4.500 26 6.500 V20 Q26 22 24 22 H4 Q2 22 2 20 Z" fill="#7cb342"/><rect x="15" y="11" width="13" height="13" rx="1.500" fill="#dcedc8"/><rect x="17.500" y="9" width="12.500" height="12.500" rx="1.500" fill="#dcedc8" stroke="#7cb342" stroke-width="1"/><path d="M23.700 12 V18.500 M20.500 15.200 H27" stroke="#7cb342" stroke-width="1.600"/></svg><span class="lb" style="left:113px">utils</span></div>
<div class="row" style="top:1100px"><div class="ar r" style="left:43px;top:15px"></div><svg class="ic" style="left:70px;top:10px" width="28" height="24" viewBox="0 0 28 24"><path d="M2 3.500 Q2 1.500 4 1.500 H10.500 L13.500 4.500 H24 Q26 4.500 26 6.500 V20 Q26 22 24 22 H4 Q2 22 2 20 Z" fill="#90a4ae"/></svg><span class="lb" style="left:113px">wxParse</span></div>
<div class="row" style="top:1144px"><div class="ic" style="left:72px;top:10px;width:24px;height:24px;background:#ffca28"><span style="position:absolute;right:1px;bottom:1px;font-size:13px;line-height:1;font-weight:bold;color:#3a2c00;letter-spacing:-.5px">JS</span></div><span class="lb" style="left:113px">app.js</span></div>
<div class="row" style="top:1188px"><svg class="ic" style="left:67px;top:10px" width="34" height="24" viewBox="0 0 34 24"><path class="st" d="M8.500 1.500 Q5 1.500 5 5 V8.500 Q5 12 1.500 12 Q5 12 5 15.500 V19 Q5 22.500 8.500 22.500 M25.500 1.500 Q29 1.500 29 5 V8.500 Q29 12 32.500 12 Q29 12 29 15.500 V19 Q29 22.500 25.500 22.500" stroke="#fbc02d" stroke-width="2.600"/><circle cx="12" cy="16" r="1.300" fill="#fbc02d"/><circle cx="17" cy="16" r="1.300" fill="#fbc02d"/><circle cx="22" cy="16" r="1.300" fill="#fbc02d"/></svg><span class="lb" style="left:113px">app.json</span></div>
<div class="a" style="left:57px;top:308px;width:2px;height:176px;background:#585858"></div>
</div>
<div class="ex" style="top:1614px;height:34px;background:#383838"></div>
<div class="ar r" style="left:1019px;top:1629px"></div>
<span class="t" style="left:1042px;top:1626px;font-size:22px;font-weight:bold;color:#cccccc">大纲</span>
<div class="ex" style="top:1648px;height:56px;background:#393939;width:400px"></div>
<svg style="left:1033px;top:1665px" width="26" height="26" viewBox="0 0 26 26"><circle cx="13" cy="13" r="11.500" class="st" stroke="#a6a6a6" stroke-width="1.600"/><path class="st" d="M8.500 8.500 L17.500 17.500 M17.500 8.500 L8.500 17.500" stroke="#a6a6a6" stroke-width="1.600"/></svg>
<span class="t" style="left:1066px;top:1666px;font-size:23px;color:#a6a6a6">0</span>
<svg style="left:1087px;top:1665px" width="26" height="26" viewBox="0 0 26 26"><path class="st" d="M13 2 L24.500 23.500 H1.500 Z M13 9.500 V16.500" stroke="#a6a6a6" stroke-width="1.600"/><circle cx="13" cy="20" r="1.200" fill="#a6a6a6"/></svg>
<span class="t" style="left:1120px;top:1666px;font-size:23px;color:#a6a6a6">0</span>

<!-- ===== editor tabs ===== -->
<style>
.jsic{position:absolute;width:24px;height:24px;background:#ffca28}
.jsic span{position:absolute;right:1px;bottom:1px;font-size:13px;line-height:1;font-weight:bold;color:#3a2c00;letter-spacing:-.5px}
.tabl{position:absolute;top:203px;font-size:25px;line-height:1;color:#a3a3a3;white-space:nowrap}
.bc{position:absolute;top:255px;font-size:25px;line-height:1;color:#a0a0a0;white-space:nowrap}
</style>
<div class="a" style="left:1400px;top:184px;width:2px;height:1464px;background:#262626"></div>
<div class="a" style="left:1402px;top:184px;width:1098px;height:60px;background:#353535"></div>
<div class="a" style="left:1640px;top:184px;width:2px;height:60px;background:#262626"></div>
<div class="a" style="left:1880px;top:184px;width:2px;height:60px;background:#262626"></div>
<div class="a" style="left:1882px;top:184px;width:240px;height:60px;background:#2b2b2b"></div>
<div class="jsic" style="left:1426px;top:202px"><span>JS</span></div><span class="tabl" id="tab1" style="letter-spacing:0.176px;left:1467px">config.js</span>
<div class="jsic" style="left:1666px;top:202px"><span>JS</span></div><span class="tabl" id="tab2" style="letter-spacing:0.797px;left:1706px">app.js</span>
<div class="jsic" style="left:1906px;top:202px"><span>JS</span></div><span class="tabl" id="tab3" style="letter-spacing:-0.096px;left:1947px;color:#fff">index.js</span>
<svg style="left:2080px;top:204px" width="20" height="20" viewBox="0 0 20 20"><path class="st" d="M2 2 L18 18 M18 2 L2 18" stroke="#fff" stroke-width="2.200"/></svg>
<svg style="left:2141px;top:202px" width="34" height="24" viewBox="0 0 34 24"><path class="st" d="M8.500 1.500 Q5 1.500 5 5 V8.500 Q5 12 1.500 12 Q5 12 5 15.500 V19 Q5 22.500 8.500 22.500 M25.500 1.500 Q29 1.500 29 5 V8.500 Q29 12 32.500 12 Q29 12 29 15.500 V19 Q29 22.500 25.500 22.500" stroke="#fbc02d" stroke-width="2.600"/><circle cx="12" cy="16" r="1.300" fill="#fbc02d"/><circle cx="17" cy="16" r="1.300" fill="#fbc02d"/><circle cx="22" cy="16" r="1.300" fill="#fbc02d"/></svg>
<span class="tabl" id="tab4" style="letter-spacing:0.121px;left:2186px">app.json</span>
<svg style="left:2370px;top:202px" width="24" height="24" viewBox="0 0 24 24"><rect x="1" y="1" width="22" height="22" rx="1" class="st" stroke="#d4d4d4" stroke-width="2"/><path d="M12 1 V23" stroke="#d4d4d4" stroke-width="2"/></svg>
<div class="a" style="left:2433px;top:212px;width:4px;height:4px;border-radius:50%;background:#d4d4d4;box-shadow:10px 0 0 #d4d4d4,20px 0 0 #d4d4d4"></div>
<!-- code line -->
<div class="a" style="left:1402px;top:288px;width:1098px;height:36px;background:#2e2e2e;overflow:hidden">
 <span class="t mono" style="left:17px;top:-5px;font-size:28.500px;color:#5a5a5a">10</span>
 <div class="a" style="left:105px;top:0;width:1px;height:36px;background:#454545"></div>
 <div class="a" style="left:140px;top:0;width:1px;height:36px;background:#454545"></div>
 <span class="t mono" style="left:174px;top:-5px;font-size:28.500px;color:#d6d6d6">circular<span style="color:#89ddff">:</span> <span style="color:#f4796b">true</span><span style="color:#89ddff">,</span></span>
 <div class="a" style="left:1068px;top:0;width:1px;height:36px;background:#3a3a3a"></div>
 <div class="a" style="left:1070px;top:20px;width:28px;height:2px;background:#9a9a9a"></div>
 <div class="a" style="left:1079px;top:15px;width:9px;height:12px;background:#9a9a9a"></div>
</div>
<!-- breadcrumb -->
<div class="a" style="left:1402px;top:244px;width:1098px;height:44px;background:#2e2e2e;box-shadow:0 3px 5px rgba(0,0,0,.45)"></div>
<svg style="left:1417px;top:255px" width="30" height="22" viewBox="0 0 30 22"><path d="M6 2 H29 M6 8 H29 M6 14 H29 M6 20 H29" stroke="#a9a9a9" stroke-width="1.800"/><path d="M0 2 H2.500 M0 8 H2.500 M0 14 H2.500 M0 20 H2.500" stroke="#a9a9a9" stroke-width="1.800"/></svg>
<svg style="left:1481px;top:252px" width="22" height="30" viewBox="0 0 22 30"><path class="st" d="M2 1.500 H20 V27 L11 19.500 L2 27 Z" stroke="#a9a9a9" stroke-width="2" stroke-linejoin="miter"/></svg>
<svg style="left:1540px;top:255px" width="26" height="22" viewBox="0 0 26 22"><path class="st" d="M11 1.500 L1.500 11 L11 20.500 M2 11 H25" stroke="#a9a9a9" stroke-width="1.800"/></svg>
<svg style="left:1595px;top:255px" width="26" height="22" viewBox="0 0 26 22"><path class="st" d="M15 1.500 L24.500 11 L15 20.500 M24 11 H1" stroke="#a9a9a9" stroke-width="1.800"/></svg>
<span class="bc" id="bc1" style="letter-spacing:-0.165px;left:1655px">pages</span>
<svg style="left:1734px;top:256px" width="12" height="22" viewBox="0 0 12 22"><path class="st" d="M1.500 1.500 L10.500 11 L1.500 20.500" stroke="#a0a0a0" stroke-width="1.800"/></svg>
<span class="bc" id="bc2" style="letter-spacing:0.247px;left:1755px">index</span>
<svg style="left:1829px;top:256px" width="12" height="22" viewBox="0 0 12 22"><path class="st" d="M1.500 1.500 L10.500 11 L1.500 20.500" stroke="#a0a0a0" stroke-width="1.800"/></svg>
<div class="jsic" style="left:1852px;top:254px"><span>JS</span></div>
<span class="bc" id="bc3" style="letter-spacing:-0.133px;left:1893px">index.js</span>
<svg style="left:1989px;top:256px" width="12" height="22" viewBox="0 0 12 22"><path class="st" d="M1.500 1.500 L10.500 11 L1.500 20.500" stroke="#a0a0a0" stroke-width="1.800"/></svg>
<svg style="left:2013px;top:251px" width="26" height="30" viewBox="0 0 26 30"><path class="st" d="M13 1.500 L24.500 8 V21.500 L13 28.500 L1.500 21.500 V8 Z M1.500 8 L13 14.500 L24.500 8 M13 14.500 V28.500" stroke="#a074c4" stroke-width="1.800"/></svg>
<span class="bc" id="bc4" style="letter-spacing:0.883px;left:2054px">getMore</span>
<svg style="left:2163px;top:256px" width="12" height="22" viewBox="0 0 12 22"><path class="st" d="M1.500 1.500 L10.500 11 L1.500 20.500" stroke="#a0a0a0" stroke-width="1.800"/></svg>
<svg style="left:2187px;top:251px" width="26" height="30" viewBox="0 0 26 30"><path class="st" d="M13 1.500 L24.500 8 V21.500 L13 28.500 L1.500 21.500 V8 Z M1.500 8 L13 14.500 L24.500 8 M13 14.500 V28.500" stroke="#a074c4" stroke-width="1.800"/></svg>
<span class="bc" id="bc5" style="letter-spacing:-0.816px;left:2228px">success</span>
<!-- ===== panel header ===== -->
<div class="a" style="left:1402px;top:324px;width:1098px;height:2px;background:#474747"></div>
<div class="a" style="left:1402px;top:326px;width:1098px;height:58px;background:#333333"></div>
<span class="t" style="left:1441px;top:346px;font-size:22px;color:#9d9d9d">构建</span>
<span class="t" style="left:1526px;top:346px;font-size:22px;color:#ececec">调试器</span>
<div class="a" style="left:1526px;top:382px;width:66px;height:2px;background:#e7e7e7"></div>
<div class="a" style="left:1608px;top:338px;width:36px;height:36px;border-radius:50%;background:#4d4d4d"><span class="t" style="left:50%;top:7px;font-size:22px;color:#fff;transform:translateX(-50%)">4</span></div>
<span class="t" style="left:1684px;top:346px;font-size:22px;color:#9d9d9d">问题</span>
<span class="t" style="left:1768px;top:346px;font-size:22px;color:#9d9d9d">输出</span>
<span class="t" style="left:1852px;top:346px;font-size:22px;color:#9d9d9d">终端</span>
<span class="t" style="left:1935px;top:346px;font-size:22px;color:#9d9d9d">代码质量</span>
<svg style="left:2372px;top:354px" width="20" height="12" viewBox="0 0 20 12"><path class="st" d="M1.500 10.500 L10 2 L18.500 10.500" stroke="#d0d0d0" stroke-width="2"/></svg>
<svg style="left:2437px;top:352px" width="18" height="18" viewBox="0 0 18 18"><path class="st" d="M1.500 1.500 L16.500 16.500 M16.500 1.500 L1.500 16.500" stroke="#d0d0d0" stroke-width="2"/></svg>
<!-- ===== devtools ===== -->
<style>
.dt{position:absolute;top:401px;font-size:23px;line-height:1;color:#e8eaed;white-space:nowrap}
.vd{position:absolute;width:2px;background:#4a4c50}
.tr{position:absolute;left:0;width:700px;height:43px;font-family:"DejaVu Sans Mono","Liberation Mono",monospace;font-size:24px;line-height:1;white-space:nowrap;-webkit-text-stroke:.3px}
.tr .k{position:absolute;left:204px;top:8px;color:#5db0d7}
.tr .w{color:#ffffff}
.tr .n{color:#b8a6f2}
.tr .s{color:#d0d0d0}
.hd{position:absolute;left:20px;top:7px;width:6px;height:6px;background:#8c8c8c;box-shadow:10px 0 0 #8c8c8c,0 12px 0 #8c8c8c,10px 12px 0 #8c8c8c,0 24px 0 #8c8c8c,10px 24px 0 #8c8c8c}
.sq{position:absolute;left:68px;top:8px;width:25px;height:26px;border:4px solid #8c8c8c}
.sq:after{content:"";position:absolute;left:0;top:3px;width:17px;height:3.500px;background:#8c8c8c}
.tri{position:absolute;left:175px;top:13px;border:8px solid transparent;border-left:12px solid #9a9a9a;border-right:0}
.cb{display:inline-block;position:relative;width:26px;height:0;vertical-align:baseline;margin:0 2px 0 0}
.cb:before{content:"";position:absolute;left:0;top:-23px;width:26px;height:26px;border-radius:4px;background:#dc8e35}
.cb:after{content:"";position:absolute;left:9px;top:-20px;width:8px;height:14px;border:solid #33302c;border-width:0 4px 4px 0;transform:rotate(42deg)}
</style>
<div class="a" style="left:1402px;top:384px;width:1098px;height:53px;background:#292a2d"></div>
<div class="a" style="left:1402px;top:436px;width:1098px;height:2px;background:#46484b"></div>
<svg style="left:1421px;top:397px" width="30" height="30" viewBox="0 0 30 30"><path class="st" d="M7 23.500 H3.500 Q1.500 23.500 1.500 21.500 V3.500 Q1.500 1.500 3.500 1.500 H21.500 Q23.500 1.500 23.500 3.500 V8" stroke="#9aa0a6" stroke-width="2" stroke-linecap="butt"/><path d="M10.500 10.500 L27 17 L20.500 19.800 L26.500 26 L24.500 28 L18.300 21.800 L15.500 28 Z" fill="#9aa0a6"/></svg>
<div class="vd" style="left:1470px;top:395px;height:31px"></div>
<span class="dt" id="dt1" style="letter-spacing:0.204px;left:1508px">Wxml</span>
<span class="dt" id="dt2" style="letter-spacing:-0.013px;left:1616px">Console</span>
<span class="dt" id="dt3" style="letter-spacing:-0.382px;left:1748px">Sources</span>
<span class="dt" id="dt4" style="letter-spacing:0.692px;left:1878px">Network</span>
<div class="a" style="left:1992px;top:384px;width:140px;height:52px;background:#000"></div>
<span class="dt" id="dt5" style="letter-spacing:0.398px;left:2015px;color:#fff">AppData</span>
<svg style="left:2150px;top:402px" width="18" height="18" viewBox="0 0 18 18"><path class="st" d="M2 2 L9 9 L2 16 M9.500 2 L16.500 9 L9.500 16" stroke="#c8c8c8" stroke-width="2"/></svg>
<svg style="left:2213px;top:400px" width="22" height="22" viewBox="0 0 22 22"><path d="M11 1.500 L21 20 H1 Z" fill="#f5bd23" stroke="#f5bd23" stroke-width="1.500" stroke-linejoin="round"/><path d="M11 8 V14" stroke="#fff" stroke-width="2.400"/><circle cx="11" cy="17.200" r="1.400" fill="#fff"/></svg>
<span class="dt" style="left:2241px;color:#c8c8c8">4</span>
<svg style="left:2263px;top:401px" width="22" height="22" viewBox="0 0 22 22"><path d="M2.500 1.500 H19.500 Q21 1.500 21 3 V14 Q21 15.500 19.500 15.500 H7 L1 20.500 V3 Q1 1.500 2.500 1.500 Z" fill="#2a8af6"/><path d="M5 5.800 H17 M5 10.300 H13" stroke="#fff" stroke-width="1.800"/></svg>
<span class="dt" style="left:2290px;color:#c8c8c8">2</span>
<div class="vd" style="left:2316px;top:395px;height:31px"></div>
<svg style="left:2339px;top:397px" width="28" height="28" viewBox="0 0 24 24"><path fill="#9aa0a6" d="M19.430 12.980c.040-.320.070-.640.070-.980s-.030-.660-.070-.980l2.110-1.650c.190-.150.240-.420.120-.640l-2-3.460c-.120-.220-.390-.300-.610-.220l-2.490 1c-.520-.400-1.080-.730-1.690-.980l-.380-2.650C14.460 2.180 14.250 2 14 2h-4c-.250 0-.460.180-.490.420l-.380 2.650c-.610.250-1.170.590-1.690.980l-2.490-1c-.230-.090-.490 0-.610.220l-2 3.460c-.130.220-.070.490.120.640l2.110 1.650c-.040.320-.070.650-.070.980s.030.660.070.980l-2.110 1.650c-.190.150-.240.420-.120.640l2 3.460c.120.220.390.300.610.220l2.490-1c.520.400 1.080.730 1.690.980l.380 2.650c.030.240.240.420.490.420h4c.250 0 .460-.180.490-.420l.380-2.650c.610-.250 1.170-.590 1.690-.980l2.490 1c.230.090.490 0 .610-.220l2-3.460c.120-.220.070-.490-.120-.640l-2.110-1.650zM12 15.500c-1.930 0-3.500-1.570-3.500-3.500s1.570-3.500 3.500-3.500 3.500 1.570 3.500 3.500-1.570 3.500-3.500 3.500z"/></svg>
<div class="a" style="left:2408px;top:397px;width:5px;height:5px;border-radius:50%;background:#9aa0a6;box-shadow:0 10px 0 #9aa0a6,0 20px 0 #9aa0a6"></div>
<svg style="left:2449px;top:395px" width="40" height="32" viewBox="0 0 40 32"><rect x="10.500" y="3.500" width="21" height="15" fill="none" stroke="#6e6e6e" stroke-width="5"/><path d="M3 8 V27 H26.500 V23" fill="none" stroke="#6e6e6e" stroke-width="6"/></svg>
<!-- pages sidebar -->
<div class="a" style="left:1402px;top:438px;width:398px;height:810px;background:#292a2d"></div>
<div class="vd" style="left:1800px;top:438px;height:810px"></div>
<span class="t" id="pagesh" style="letter-spacing:-1.004px;left:1419px;top:456px;font-size:23px;color:#fff">Pages</span>
<div class="a" style="left:1402px;top:492px;width:398px;height:52px;background:#4a4a4a"></div>
<svg style="left:1423px;top:503px" width="22" height="30" viewBox="0 0 22 30"><path d="M2.500 1 H13.500 L21 8.500 V26.500 Q21 28.500 19 28.500 H2.500 Q1 28.500 1 26.500 V3 Q1 1 2.500 1 Z" fill="#bdbdbd"/><path d="M13 1 V9 H21 Z" fill="#4a4a4a" opacity=".55"/></svg>
<span class="t" id="pagesp" style="letter-spacing:0.593px;left:1458px;top:507px;font-size:23px;color:#d0d0d0">pages/index/index</span>
<!-- appdata toolbar -->
<div class="a" style="left:1802px;top:438px;width:698px;height:53px;background:#292a2d"></div>
<div class="a" style="left:1802px;top:490px;width:698px;height:2px;background:#3f4043"></div>
<div class="a" style="left:1802px;top:492px;width:698px;height:756px;background:#202124"></div>
<svg style="left:1820px;top:450px" width="28" height="28" viewBox="0 0 28 28"><path class="st" d="M23.950 14.600 A10.050 10.050 0 1 1 20.600 6.400" stroke="#909090" stroke-width="4.200" stroke-linecap="butt"/><path d="M25.750 0 V11.200 H15.400 Z" fill="#909090"/></svg>
<div class="vd" style="left:1870px;top:448px;height:33px;background:#3e4042"></div>
<svg style="left:1889px;top:447px" width="28" height="34" viewBox="0 0 28 34"><path d="M0 17 H28" stroke="#909090" stroke-width="3.600"/><path d="M14 1 L21 9 H16.500 V13 H11.500 V9 H7 Z M14 33 L21 25 H16.500 V21 H11.500 V25 H7 Z" fill="#909090"/></svg>
<svg style="left:1941px;top:447px" width="28" height="34" viewBox="0 0 28 34"><path d="M0 17 H28" stroke="#909090" stroke-width="3.600"/><path d="M14 14 L21 6 H16.500 V2.500 H11.500 V6 H7 Z M14 20 L21 28 H16.500 V31.500 H11.500 V28 H7 Z" fill="#909090"/></svg>
<div class="vd" style="left:1992px;top:448px;height:33px;background:#3e4042"></div>
<svg style="left:2012px;top:451px" width="28" height="26" viewBox="0 0 28 26"><path class="st" d="M8 8.800 A8.500 8.500 0 1 1 15.500 23.400" stroke="#5c5c5c" stroke-width="4" stroke-linecap="butt"/><path d="M1 12.500 L11.500 3 L12.500 15 Z" fill="#5c5c5c"/></svg>
<svg style="left:2065px;top:451px" width="28" height="26" viewBox="0 0 28 26"><path class="st" d="M20 8.800 A8.500 8.500 0 1 0 12.500 23.400" stroke="#5c5c5c" stroke-width="4" stroke-linecap="butt"/><path d="M27 12.500 L16.500 3 L15.500 15 Z" fill="#5c5c5c"/></svg>
<div class="vd" style="left:2114px;top:448px;height:33px;background:#3e4042"></div>
<span class="t" style="left:2136px;top:455px;font-size:23px;letter-spacing:-.6px;color:#e8eaed">Tree</span>
<div class="a" style="left:2203px;top:459px;border:7px solid transparent;border-top:11px solid #9a9a9a;border-bottom:0"></div>
<!-- tree -->
<div class="a" id="adtree" style="left:1802px;top:497px;width:698px;height:750px">

<div class="tr" style="top:0px"><i class="sq"></i><div class="a" style="left:124px;top:15px;border:8px solid transparent;border-top:12px solid #9a9a9a;border-bottom:0"></div><span class="k" style="left:156px;color:#dedede">object <span class="w">{16}</span></span></div>
<div class="tr" style="top:43px"><i class="hd"></i><i class="sq"></i><span class="k">autoplay<span class="s" style="margin:0 9px 0 8px">:</span><i class="cb"></i><span class="w" style="margin-left:13px">true</span></span></div>
<div class="tr" style="top:86px"><i class="hd"></i><i class="sq"></i><i class="tri"></i><span class="k">brand <span class="w">[7]</span></span></div>
<div class="tr" style="top:129px"><i class="hd"></i><i class="sq"></i><span class="k">circular<span class="s" style="margin:0 9px 0 8px">:</span><i class="cb"></i><span class="w" style="margin-left:13px">true</span></span></div>
<div class="tr" style="top:172px"><i class="hd"></i><i class="sq"></i><i class="tri"></i><span class="k">course <span class="w">[6]</span></span></div>
<div class="tr" style="top:215px"><i class="hd"></i><i class="sq"></i><span class="k">duration<span class="s" style="margin:0 9px 0 8px">:</span><span class="n">1000</span></span></div>
<div class="tr" style="top:258px"><i class="hd"></i><i class="sq"></i><i class="tri"></i><span class="k">imgUrl <span class="w">[0]</span></span></div>
<div class="tr" style="top:301px"><i class="hd"></i><i class="sq"></i><i class="tri"></i><span class="k">imgUrls <span class="w">[3]</span></span></div>
<div class="tr" style="top:344px"><i class="hd"></i><i class="sq"></i><span class="k">index<span class="s" style="margin:0 9px 0 8px">:</span><span class="n">2</span></span></div>
<div class="tr" style="top:387px"><i class="hd"></i><i class="sq"></i><span class="k">indicatorDots<span class="s" style="margin:0 9px 0 8px">:</span><i class="cb"></i><span class="w" style="margin-left:13px">true</span></span></div>
<div class="tr" style="top:430px"><i class="hd"></i><i class="sq"></i><span class="k">interval<span class="s" style="margin:0 9px 0 8px">:</span><span class="n">5000</span></span></div>
<div class="tr" style="top:473px"><i class="hd"></i><i class="sq"></i><i class="tri"></i><span class="k">kbs <span class="w">[0]</span></span></div>
<div class="tr" style="top:516px"><i class="hd"></i><i class="sq"></i><i class="tri"></i><span class="k">lastcat <span class="w">[0]</span></span></div>
<div class="tr" style="top:559px"><i class="hd"></i><i class="sq"></i><span class="k">page<span class="s" style="margin:0 9px 0 8px">:</span><span class="n">2</span></span></div>
<div class="tr" style="top:602px"><i class="hd"></i><i class="sq"></i><i class="tri"></i><span class="k">proCat <span class="w">[4]</span></span></div>
<div class="tr" style="top:645px"><i class="hd"></i><i class="sq"></i><i class="tri"></i><span class="k">productData <span class="w">[1]</span></span></div>
<div class="tr" style="top:688px"><i class="sq"></i><span class="k">__webviewId__<span class="s" style="margin:0 9px 0 8px">:</span><span class="n">1</span></span></div>
</div>
<!-- ===== console drawer ===== -->
<style>
.ct{position:absolute;font-size:23px;line-height:1;white-space:nowrap}
.cl{position:absolute;left:49px;font-family:"DejaVu Sans Mono","Liberation Mono",monospace;font-size:21.900px;line-height:28px;white-space:pre;color:#f2f2f2;-webkit-text-stroke:.3px #f2f2f2}
</style>
<div class="a" style="left:1402px;top:1248px;width:1098px;height:2px;background:#555"></div>
<div class="a" style="left:1402px;top:1250px;width:1098px;height:52px;background:#292a2d"></div>
<div class="a" style="left:1431px;top:1264px;width:5px;height:5px;border-radius:50%;background:#9aa0a6;box-shadow:0 10px 0 #9aa0a6,0 20px 0 #9aa0a6"></div>
<div class="a" style="left:1458px;top:1249px;width:124px;height:53px;background:#000"></div>
<span class="ct" id="cs1" style="letter-spacing:0.087px;left:1477px;top:1267px;color:#fff">Console</span>
<span class="ct" id="cs2" style="letter-spacing:-0.824px;left:1601px;top:1267px;color:#e8eaed">Task</span>
<svg style="left:2457px;top:1267px" width="18" height="18" viewBox="0 0 18 18"><path d="M1.500 1.500 L16.500 16.500 M16.500 1.500 L1.500 16.500" stroke="#b4b4b4" stroke-width="3.200"/></svg>
<div class="a" style="left:1402px;top:1302px;width:1098px;height:2px;background:#46484b"></div>
<div class="a" style="left:1402px;top:1304px;width:1098px;height:52px;background:#292a2d"></div>
<div class="a" style="left:1402px;top:1356px;width:1098px;height:2px;background:#46484b"></div>
<svg style="left:1418px;top:1318px" width="30" height="26" viewBox="0 0 30 26"><rect x="1.200" y="1.200" width="27.600" height="23.600" fill="none" stroke="#9a9a9a" stroke-width="2.400"/><path d="M9 1 V25" stroke="#9a9a9a" stroke-width="2.400"/><path d="M14 7 L23 13 L14 19 Z" fill="#9a9a9a"/></svg>
<svg style="left:1478px;top:1318px" width="26" height="26" viewBox="0 0 26 26"><circle cx="13" cy="13" r="10.800" fill="none" stroke="#9a9a9a" stroke-width="3.400"/><path d="M5.500 5.500 L20.500 20.500" stroke="#9a9a9a" stroke-width="3.400"/></svg>
<div class="vd" style="left:1526px;top:1314px;height:32px;background:#46484b"></div>
<span class="ct" style="left:1546px;top:1322px;color:#e8eaed">top</span>
<div class="a" style="left:1788px;top:1324px;border:7px solid transparent;border-top:11px solid #9a9a9a;border-bottom:0"></div>
<div class="vd" style="left:1820px;top:1314px;height:32px;background:#46484b"></div>
<svg style="left:1841px;top:1319px" width="34" height="24" viewBox="0 0 34 24"><path d="M17 1 C8.500 1 3 7 1 12 C3 17 8.500 23 17 23 C25.500 23 31 17 33 12 C31 7 25.500 1 17 1 Z M17 19.500 A7.500 7.500 0 1 1 17 4.500 A7.500 7.500 0 1 1 17 19.500 Z" fill="#9a9a9a" fill-rule="evenodd"/><circle cx="17" cy="12" r="4.500" fill="#9a9a9a"/></svg>
<div class="vd" style="left:1894px;top:1314px;height:32px;background:#46484b"></div>
<div class="a" style="left:1908px;top:1310px;width:197px;height:41px;border:2px solid #55575a;background:#202124"></div>
<span class="ct" style="left:1919px;top:1322px;color:#b0b0b0">Filter</span>
<span class="ct" id="cs3" style="letter-spacing:0.18px;left:2122px;top:1322px;color:#e8eaed">Default levels</span>
<div class="a" style="left:2273px;top:1324px;border:7px solid transparent;border-top:11px solid #9a9a9a;border-bottom:0"></div>
<div class="vd" style="left:2315px;top:1314px;height:32px;background:#46484b"></div>
<span class="ct" id="cs4" style="letter-spacing:0.319px;left:2336px;top:1322px;color:#9aa0a6">1 hidden</span>
<svg style="left:2451px;top:1316px" width="30" height="30" viewBox="0 0 24 24"><path fill="#9a9a9a" d="M19.430 12.980c.040-.320.070-.640.070-.980s-.030-.660-.070-.980l2.110-1.650c.190-.150.240-.420.120-.640l-2-3.460c-.120-.220-.390-.300-.610-.220l-2.490 1c-.520-.400-1.080-.730-1.690-.980l-.380-2.650C14.460 2.180 14.250 2 14 2h-4c-.250 0-.460.180-.490.420l-.380 2.650c-.610.250-1.170.590-1.690.980l-2.490-1c-.230-.090-.490 0-.610.220l-2 3.460c-.130.220-.070.490.120.640l2.110 1.650c-.040.320-.070.650-.070.980s.030.660.070.980l-2.110 1.650c-.190.150-.240.420-.120.640l2 3.460c.120.220.390.300.610.220l2.490-1c.520.400 1.080.730 1.690.980l.380 2.650c.030.240.240.420.490.420h4c.250 0 .460-.180.490-.420l.380-2.650c.610-.250 1.170-.590 1.690-.980l2.490 1c.230.090.490 0 .610-.220l2-3.460c.120-.220.070-.490-.120-.640l-2.110-1.650zM12 15.500c-1.930 0-3.500-1.570-3.500-3.500s1.570-3.500 3.500-3.500 3.500 1.570 3.500 3.500-1.570 3.500-3.500 3.500z"/></svg>
<!-- messages -->
<div class="a" style="left:1402px;top:1358px;width:1098px;height:290px;background:#242424"></div>
<div class="a" style="left:1402px;top:1358px;width:1069px;height:176px;background:#332b00;overflow:hidden">
<div class="cl" style="top:-23px">     |
&gt; 13 |       &lt;navigator class="pr" url="../product/detail?productId=
{{item.id}}" hover-class="changestyle"
     |        ^
  14 |                  wx:for="{{productData}}"&gt;
  15 |         &lt;image class="photo" src="{{item.photo_x}}"&gt;&lt;/image&gt;
  16 |         &lt;view class="title"&gt;{{item.name}}&lt;/view&gt;</div>
</div>
<div class="a" style="left:1402px;top:1533px;width:1069px;height:2px;background:#665500"></div>
<div class="cl" style="left:1451px;top:1543px">[system] Launch Time: 5823 ms</div>
<div class="a" style="left:1402px;top:1572px;width:1069px;height:1px;background:#3a3a3a"></div>
<svg style="left:1420px;top:1584px" width="14" height="20" viewBox="0 0 14 20"><path d="M2.500 2.500 L11 10 L2.500 17.500" fill="none" stroke="#3b7ff0" stroke-width="3"/></svg>
<!-- scrollbar -->
<div class="a" style="left:2471px;top:1358px;width:29px;height:290px;background:#2b2b2b"></div>
<div class="a" style="left:2471px;top:1567px;width:27px;height:80px;background:#3c3c3c;border:1px solid #555;border-radius:3px"></div>
<!-- editor status bar -->
<div class="a" style="left:1400px;top:1648px;width:1100px;height:56px;background:#393939"></div>
<span class="ct" id="sb1" style="letter-spacing:0.325px;left:1941px;top:1667px;color:#a6a6a6">行 122，列 24</span>
<span class="ct" id="sb2" style="letter-spacing:-0.036px;left:2123px;top:1667px;color:#a6a6a6">空格: 2</span>
<span class="ct" id="sb3" style="letter-spacing:-0.634px;left:2228px;top:1667px;color:#a6a6a6">UTF-8</span>
<span class="ct" id="sb4" style="letter-spacing:-2.422px;left:2323px;top:1667px;color:#a6a6a6">LF</span>
<span class="ct" id="sb5" style="letter-spacing:-0.268px;left:2377px;top:1667px;color:#a6a6a6">JavaScript</span>
</div>
</body>
</html>
